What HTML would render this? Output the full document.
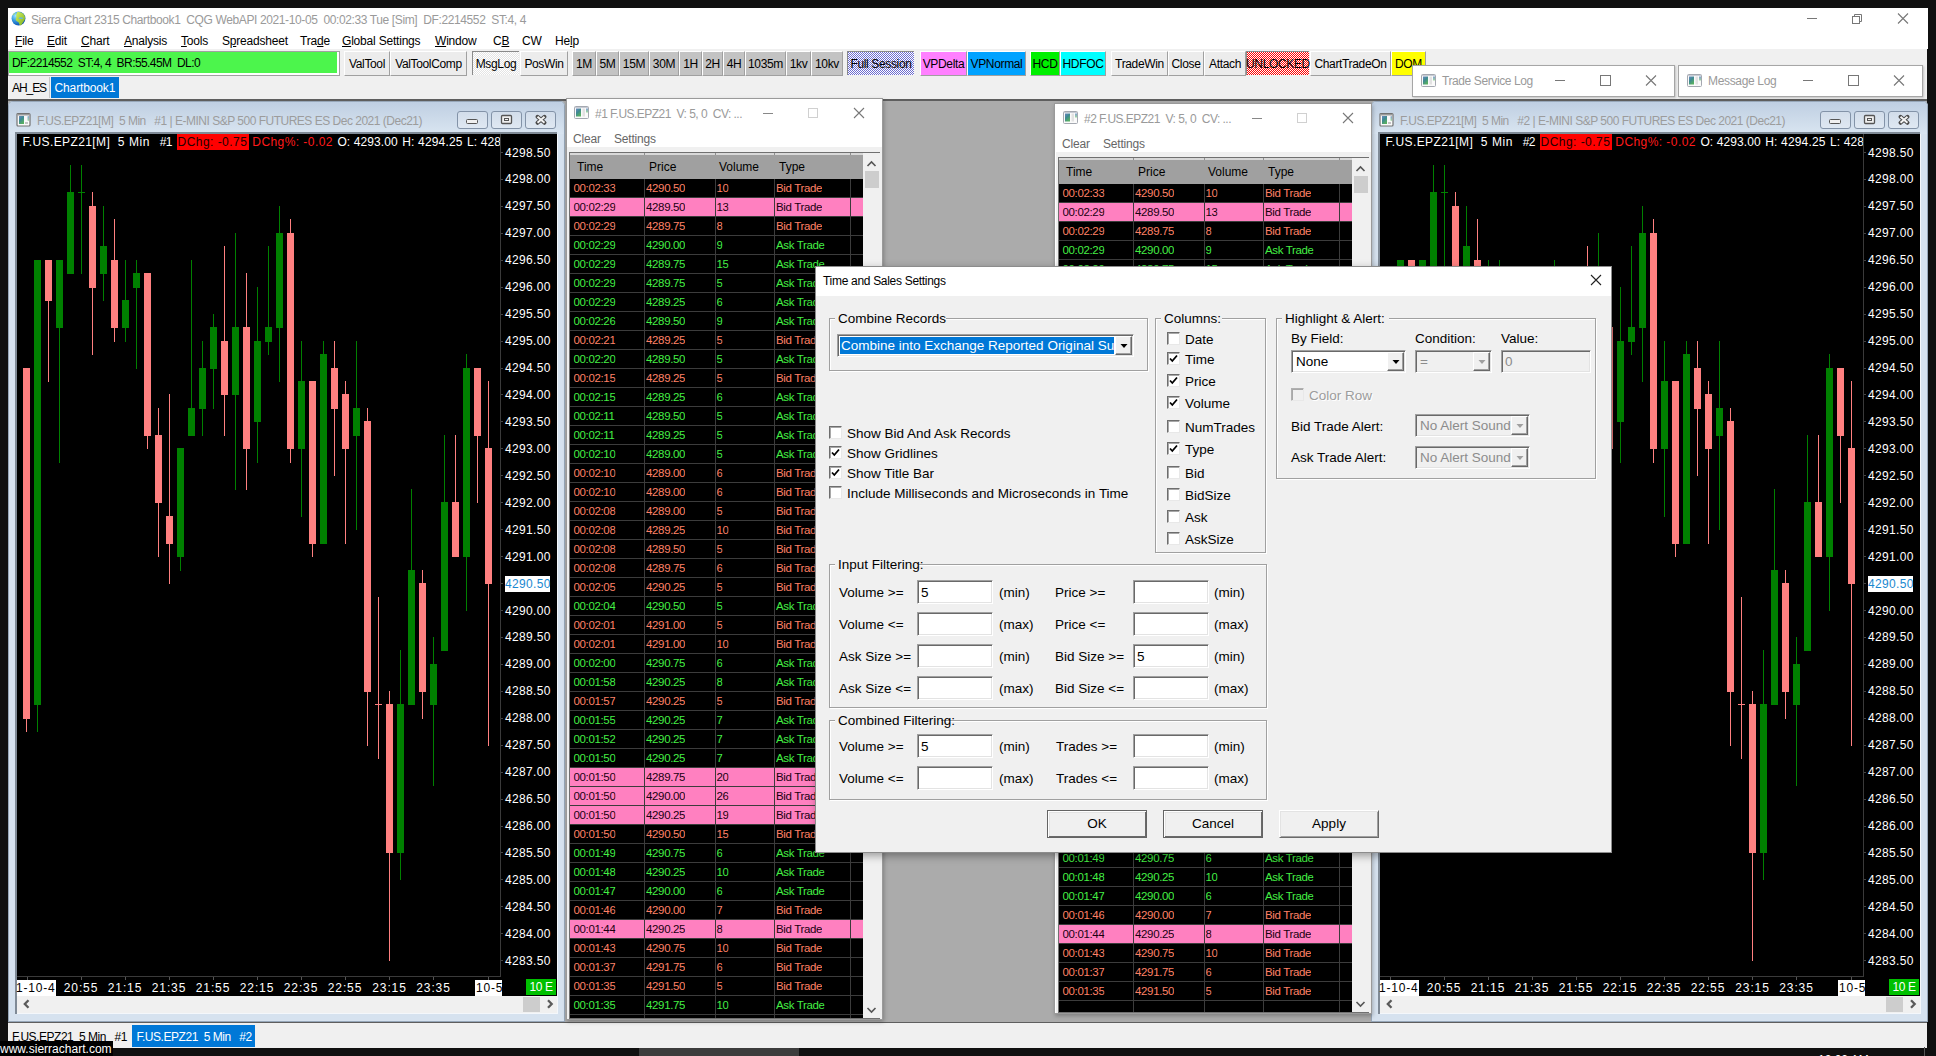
<!DOCTYPE html>
<html><head><meta charset="utf-8"><title>Sierra Chart</title>
<style>
html,body{margin:0;padding:0;width:1936px;height:1056px;overflow:hidden;background:#101010}
.a{position:absolute;box-sizing:content-box}
.t{font-family:"Liberation Sans", sans-serif;white-space:pre}
.btn{border-right:1px solid #a0a0a0;border-bottom:1px solid #a0a0a0;border-left:1px solid #fff;border-top:1px solid #fff;box-sizing:border-box}
svg.a{overflow:visible}
</style></head><body>
<div class="a" style="left:0px;top:0px;width:1936px;height:1056px;background:#101010;"></div>
<div class="a" style="left:8px;top:8px;width:1920px;height:41px;background:#ffffff;"></div>
<svg class="a" style="left:10.5px;top:11.3px" width="15" height="15" viewBox="0 0 16 16"><defs><radialGradient id="gl" cx="30%" cy="30%" r="75%"><stop offset="0" stop-color="#9fe6ff"/><stop offset="0.45" stop-color="#3a9ee0"/><stop offset="1" stop-color="#0a50b0"/></radialGradient><linearGradient id="gland" x1="0" y1="0" x2="1" y2="1"><stop offset="0" stop-color="#d4f060"/><stop offset="1" stop-color="#7cb020"/></linearGradient></defs><circle cx="8" cy="8" r="7.4" fill="url(#gl)"/><path d="M6.5 1.2 C9 0.6 12.5 1.5 14.3 4.5 C15.3 6.5 15.2 9 14 10.5 C13 12 12 13.5 11 15 C10 15.5 9 15 8.6 13.2 C8.2 11.5 6.4 11.4 5.4 10.2 C4.7 9 5 7.5 6 6.8 C5.3 5.2 5.5 3.8 6.5 1.2 Z" fill="url(#gland)"/><ellipse cx="10.5" cy="7.6" rx="2.4" ry="0.9" fill="#6ab8d0"/><path d="M1.5 4.5 C2.5 3 3.5 2.5 4.5 2.2 C4 3.2 3 4 1.5 4.5Z" fill="#b8e040"/></svg>
<div class="a t " style="left:31px;top:12.5px;line-height:14px;font-size:12px;color:#9a9a9a;;letter-spacing:-0.381px">Sierra Chart 2315 Chartbook1  CQG WebAPI 2021-10-05  00:02:33 Tue [Sim]  DF:2214552  ST:4, 4</div>
<svg class="a" style="left:1800px;top:10px" width="120" height="20"><line x1="7" y1="8.5" x2="17" y2="8.5" stroke="#777" stroke-width="1"/><rect x="52.5" y="6.5" width="7" height="7" fill="none" stroke="#777"/><path d="M54.5 6.5 V4.5 H61.5 V11.5 H59.5" fill="none" stroke="#777"/><path d="M98 3.5 L108 13.5 M108 3.5 L98 13.5" stroke="#777" stroke-width="1.1"/></svg>
<div class="a t" style="left:15px;top:34.3px;line-height:14px;font-size:12px;color:#000;letter-spacing:-0.2px"><span style="text-decoration:underline;text-underline-offset:1px">F</span>ile</div>
<div class="a t" style="left:47px;top:34.3px;line-height:14px;font-size:12px;color:#000;letter-spacing:-0.2px"><span style="text-decoration:underline;text-underline-offset:1px">E</span>dit</div>
<div class="a t" style="left:81px;top:34.3px;line-height:14px;font-size:12px;color:#000;letter-spacing:-0.2px"><span style="text-decoration:underline;text-underline-offset:1px">C</span>hart</div>
<div class="a t" style="left:124px;top:34.3px;line-height:14px;font-size:12px;color:#000;letter-spacing:-0.2px"><span style="text-decoration:underline;text-underline-offset:1px">A</span>nalysis</div>
<div class="a t" style="left:181px;top:34.3px;line-height:14px;font-size:12px;color:#000;letter-spacing:-0.2px"><span style="text-decoration:underline;text-underline-offset:1px">T</span>ools</div>
<div class="a t" style="left:222px;top:34.3px;line-height:14px;font-size:12px;color:#000;letter-spacing:-0.2px">S<span style="text-decoration:underline;text-underline-offset:1px">p</span>readsheet</div>
<div class="a t" style="left:300px;top:34.3px;line-height:14px;font-size:12px;color:#000;letter-spacing:-0.2px">Tra<span style="text-decoration:underline;text-underline-offset:1px">d</span>e</div>
<div class="a t" style="left:342px;top:34.3px;line-height:14px;font-size:12px;color:#000;letter-spacing:-0.2px"><span style="text-decoration:underline;text-underline-offset:1px">G</span>lobal Settings</div>
<div class="a t" style="left:435px;top:34.3px;line-height:14px;font-size:12px;color:#000;letter-spacing:-0.2px"><span style="text-decoration:underline;text-underline-offset:1px">W</span>indow</div>
<div class="a t" style="left:493px;top:34.3px;line-height:14px;font-size:12px;color:#000;letter-spacing:-0.2px">C<span style="text-decoration:underline;text-underline-offset:1px">B</span></div>
<div class="a t" style="left:522px;top:34.3px;line-height:14px;font-size:12px;color:#000;letter-spacing:-0.2px">CW</div>
<div class="a t" style="left:555px;top:34.3px;line-height:14px;font-size:12px;color:#000;letter-spacing:-0.2px">He<span style="text-decoration:underline;text-underline-offset:1px">l</span>p</div>
<div class="a" style="left:8px;top:49px;width:1919px;height:52px;background:#f0f0f0;"></div>
<div class="a" style="left:8px;top:51px;width:332px;height:25px;background:#a0a0a0;"></div>
<div class="a" style="left:9px;top:52px;width:330px;height:23px;background:#ffffff;"></div>
<div class="a" style="left:9px;top:52px;width:328px;height:21px;background:#4cf54c;"></div>
<div class="a t " style="left:12px;top:55.5px;line-height:14px;font-size:12px;color:#000;;letter-spacing:-0.577px">DF:2214552  ST:4, 4  BR:55.45M  DL:0</div>
<svg class="a" style="left:0;top:0" width="0" height="0"><defs><linearGradient id="icg" x1="0" y1="0" x2="0.6" y2="1"><stop offset="0" stop-color="#6a88c0"/><stop offset="0.5" stop-color="#3e8a90"/><stop offset="1" stop-color="#58b060"/></linearGradient><linearGradient id="icg2" x1="0" y1="0" x2="0" y2="1"><stop offset="0" stop-color="#80a0d0"/><stop offset="1" stop-color="#a0d8a0"/></linearGradient><pattern id="dithB" width="2" height="2" patternUnits="userSpaceOnUse"><rect width="2" height="2" fill="#ffffff"/><rect width="1" height="1" fill="#6c6cd0"/><rect x="1" y="1" width="1" height="1" fill="#6c6cd0"/></pattern><pattern id="dithR" width="2" height="2" patternUnits="userSpaceOnUse"><rect width="2" height="2" fill="#ffffff"/><rect width="1" height="1" fill="#ff0000"/><rect x="1" y="1" width="1" height="1" fill="#ff0000"/></pattern><pattern id="dithW" width="2" height="2" patternUnits="userSpaceOnUse"><rect width="2" height="2" fill="#ffffff"/><rect width="1" height="1" fill="#e4e4e4"/><rect x="1" y="1" width="1" height="1" fill="#e4e4e4"/></pattern></defs></svg>
<div class="a btn" style="left:344px;top:51px;width:46px;height:25px;background:#ececec"></div>
<div class="a t" style="left:339.0px;width:56px;text-align:center;top:57.0px;line-height:14px;font-size:12px;color:#000;letter-spacing:-0.35px">ValTool</div>
<div class="a btn" style="left:390px;top:51px;width:77px;height:25px;background:#ececec"></div>
<div class="a t" style="left:385.0px;width:87px;text-align:center;top:57.0px;line-height:14px;font-size:12px;color:#000;letter-spacing:-0.35px">ValToolComp</div>
<div class="a" style="left:472px;top:51px;width:47px;height:24px;background:#fff;border-left:1px solid #8a8a8a;border-top:1px solid #8a8a8a;box-sizing:border-box"></div>
<svg class="a" style="left:473px;top:52px" width="46" height="23" shape-rendering="crispEdges"><rect width="46" height="23" fill="url(#dithW)"/></svg>
<div class="a t" style="left:467.0px;width:58px;text-align:center;top:57.0px;line-height:14px;font-size:12px;color:#000;letter-spacing:-0.35px">MsgLog</div>
<div class="a btn" style="left:520px;top:51px;width:48px;height:25px;background:#ececec"></div>
<div class="a t" style="left:515.0px;width:58px;text-align:center;top:57.0px;line-height:14px;font-size:12px;color:#000;letter-spacing:-0.35px">PosWin</div>
<div class="a btn" style="left:572px;top:51px;width:24px;height:25px;background:#c3c3c3"></div>
<div class="a t" style="left:567.0px;width:34px;text-align:center;top:57.0px;line-height:14px;font-size:12px;color:#000;letter-spacing:-0.35px">1M</div>
<div class="a btn" style="left:596px;top:51px;width:23px;height:25px;background:#c3c3c3"></div>
<div class="a t" style="left:591.0px;width:33px;text-align:center;top:57.0px;line-height:14px;font-size:12px;color:#000;letter-spacing:-0.35px">5M</div>
<div class="a btn" style="left:619px;top:51px;width:30px;height:25px;background:#c3c3c3"></div>
<div class="a t" style="left:614.0px;width:40px;text-align:center;top:57.0px;line-height:14px;font-size:12px;color:#000;letter-spacing:-0.35px">15M</div>
<div class="a btn" style="left:649px;top:51px;width:30px;height:25px;background:#c3c3c3"></div>
<div class="a t" style="left:644.0px;width:40px;text-align:center;top:57.0px;line-height:14px;font-size:12px;color:#000;letter-spacing:-0.35px">30M</div>
<div class="a btn" style="left:679px;top:51px;width:23px;height:25px;background:#c3c3c3"></div>
<div class="a t" style="left:674.0px;width:33px;text-align:center;top:57.0px;line-height:14px;font-size:12px;color:#000;letter-spacing:-0.35px">1H</div>
<div class="a btn" style="left:702px;top:51px;width:21px;height:25px;background:#c3c3c3"></div>
<div class="a t" style="left:697.0px;width:31px;text-align:center;top:57.0px;line-height:14px;font-size:12px;color:#000;letter-spacing:-0.35px">2H</div>
<div class="a btn" style="left:723px;top:51px;width:22px;height:25px;background:#c3c3c3"></div>
<div class="a t" style="left:718.0px;width:32px;text-align:center;top:57.0px;line-height:14px;font-size:12px;color:#000;letter-spacing:-0.35px">4H</div>
<div class="a btn" style="left:745px;top:51px;width:41px;height:25px;background:#c3c3c3"></div>
<div class="a t" style="left:740.0px;width:51px;text-align:center;top:57.0px;line-height:14px;font-size:12px;color:#000;letter-spacing:-0.35px">1035m</div>
<div class="a btn" style="left:786px;top:51px;width:25px;height:25px;background:#c3c3c3"></div>
<div class="a t" style="left:781.0px;width:35px;text-align:center;top:57.0px;line-height:14px;font-size:12px;color:#000;letter-spacing:-0.35px">1kv</div>
<div class="a btn" style="left:811px;top:51px;width:32px;height:25px;background:#c3c3c3"></div>
<div class="a t" style="left:806.0px;width:42px;text-align:center;top:57.0px;line-height:14px;font-size:12px;color:#000;letter-spacing:-0.35px">10kv</div>
<div class="a" style="left:847px;top:51px;width:67px;height:24px;background:#fff;border-left:1px solid #8a8a8a;border-top:1px solid #8a8a8a;box-sizing:border-box"></div>
<svg class="a" style="left:848px;top:52px" width="66" height="23" shape-rendering="crispEdges"><rect width="66" height="23" fill="url(#dithB)"/></svg>
<div class="a t" style="left:842.0px;width:78px;text-align:center;top:57.0px;line-height:14px;font-size:12px;color:#000;letter-spacing:-0.35px">Full Session</div>
<div class="a btn" style="left:920px;top:51px;width:47px;height:25px;background:#ff80ff"></div>
<div class="a t" style="left:915.0px;width:57px;text-align:center;top:57.0px;line-height:14px;font-size:12px;color:#000;letter-spacing:-0.35px">VPDelta</div>
<div class="a btn" style="left:967px;top:51px;width:59px;height:25px;background:#00a2ff"></div>
<div class="a t" style="left:962.0px;width:69px;text-align:center;top:57.0px;line-height:14px;font-size:12px;color:#000;letter-spacing:-0.35px">VPNormal</div>
<div class="a btn" style="left:1030px;top:51px;width:30px;height:25px;background:#00f000"></div>
<div class="a t" style="left:1025.0px;width:40px;text-align:center;top:57.0px;line-height:14px;font-size:12px;color:#000;letter-spacing:-0.35px">HCD</div>
<div class="a btn" style="left:1060px;top:51px;width:46px;height:25px;background:#00ffff"></div>
<div class="a t" style="left:1055.0px;width:56px;text-align:center;top:57.0px;line-height:14px;font-size:12px;color:#000;letter-spacing:-0.35px">HDFOC</div>
<div class="a btn" style="left:1111px;top:51px;width:57px;height:25px;background:#ececec"></div>
<div class="a t" style="left:1106.0px;width:67px;text-align:center;top:57.0px;line-height:14px;font-size:12px;color:#000;letter-spacing:-0.35px">TradeWin</div>
<div class="a btn" style="left:1168px;top:51px;width:36px;height:25px;background:#ececec"></div>
<div class="a t" style="left:1163.0px;width:46px;text-align:center;top:57.0px;line-height:14px;font-size:12px;color:#000;letter-spacing:-0.35px">Close</div>
<div class="a btn" style="left:1204px;top:51px;width:42px;height:25px;background:#ececec"></div>
<div class="a t" style="left:1199.0px;width:52px;text-align:center;top:57.0px;line-height:14px;font-size:12px;color:#000;letter-spacing:-0.35px">Attach</div>
<div class="a" style="left:1246px;top:51px;width:63px;height:24px;background:#fff;border-left:1px solid #8a8a8a;border-top:1px solid #8a8a8a;box-sizing:border-box"></div>
<svg class="a" style="left:1247px;top:52px" width="62" height="23" shape-rendering="crispEdges"><rect width="62" height="23" fill="url(#dithR)"/></svg>
<div class="a t" style="left:1241.0px;width:74px;text-align:center;top:57.0px;line-height:14px;font-size:12px;color:#000;letter-spacing:-0.35px">UNLOCKED</div>
<div class="a btn" style="left:1310px;top:51px;width:81px;height:25px;background:#ececec"></div>
<div class="a t" style="left:1305.0px;width:91px;text-align:center;top:57.0px;line-height:14px;font-size:12px;color:#000;letter-spacing:-0.35px">ChartTradeOn</div>
<div class="a btn" style="left:1391px;top:51px;width:35px;height:25px;background:#ffff00"></div>
<div class="a t" style="left:1386.0px;width:45px;text-align:center;top:57.0px;line-height:14px;font-size:12px;color:#000;letter-spacing:-0.35px">DOM</div>
<div class="a" style="left:49px;top:77px;width:1px;height:21px;background:#c8c8c8;"></div>
<div class="a t " style="left:12px;top:80.5px;line-height:14px;font-size:12px;color:#000;;letter-spacing:-1.072px">AH_ES</div>
<div class="a" style="left:51px;top:77px;width:68px;height:21px;background:#0078d7;"></div>
<div class="a t " style="left:54.5px;top:80.5px;line-height:14px;font-size:12px;color:#fff;;letter-spacing:-0.125px">Chartbook1</div>
<div class="a" style="left:8px;top:99px;width:1919px;height:2px;background:#5e5e5e;"></div>
<div class="a" style="left:8px;top:101px;width:1919px;height:921px;background:#ababab;"></div>
<div class="a" style="left:8px;top:1022px;width:1919px;height:1px;background:#5e5e5e;"></div>
<div class="a" style="left:8px;top:1023px;width:1919px;height:25px;background:#f0f0f0;"></div>
<div class="a t " style="left:12px;top:1029.5px;line-height:14px;font-size:12px;color:#000;;letter-spacing:-0.472px">F.US.EPZ21  5 Min   #1</div>
<div class="a" style="left:132px;top:1025px;width:123px;height:22px;background:#0078d7;"></div>
<div class="a t " style="left:136.4px;top:1029.5px;line-height:14px;font-size:12px;color:#fff;;letter-spacing:-0.454px">F.US.EPZ21  5 Min   #2</div>
<div class="a" style="left:0px;top:1048px;width:1936px;height:8px;background:#101010;"></div>
<div class="a" style="left:639px;top:1048px;width:160px;height:8px;background:#3c3c3c;"></div>
<div class="a" style="left:0px;top:1041px;width:113px;height:15px;background:#000;"></div>
<div class="a t " style="left:0px;top:1041.5px;line-height:14px;font-size:12px;color:#fff;;letter-spacing:0.013px">www.sierrachart.com</div>
<div class="a t " style="left:1818px;top:1053.0px;line-height:14px;font-size:12px;color:#fff;">12:02 AM</div>
<div class="a" style="left:1924px;top:1047px;width:1px;height:9px;background:#555;"></div>
<div class="a" style="left:8px;top:101px;width:557px;height:921px;background:#d6e2ef;border-radius:5px 5px 0 0;box-shadow:inset 0 0 0 1px #97a7b9"></div>
<div class="a" style="left:9px;top:102px;width:555px;height:32px;background:linear-gradient(#bfcfe2,#d9e5f1);border-radius:4px 4px 0 0"></div>
<svg class="a" style="left:16px;top:113px" width="16" height="14" viewBox="0 0 16 14"><rect x="1" y="0.5" width="13" height="12.5" rx="1" fill="#fafafa" stroke="#727272" stroke-width="1.2"/><rect x="1.5" y="1" width="12" height="1.5" fill="#9a9a9a"/><rect x="3" y="3" width="5" height="8" fill="url(#icg)"/><rect x="9" y="9" width="3" height="2" fill="#c4c4c4"/><rect x="11.5" y="3" width="1.5" height="5" rx="0.7" fill="url(#icg2)"/></svg>
<div class="a t " style="left:37px;top:114.0px;line-height:14px;font-size:12px;color:#9c9c9c;;letter-spacing:-0.496px">F.US.EPZ21[M]  5 Min   #1 | E-MINI S&amp;P 500 FUTURES ES Dec 2021 (Dec21)</div>
<div class="a" style="left:457px;top:111px;width:29px;height:16px;border:1px solid #8393a8;border-radius:3px;background:linear-gradient(#d2ddea,#dfe8f2)"></div>
<div class="a" style="left:491px;top:111px;width:29px;height:16px;border:1px solid #8393a8;border-radius:3px;background:linear-gradient(#d2ddea,#dfe8f2)"></div>
<div class="a" style="left:525px;top:111px;width:29px;height:16px;border:1px solid #8393a8;border-radius:3px;background:linear-gradient(#d2ddea,#dfe8f2)"></div>
<svg class="a" style="left:457px;top:111px" width="100" height="18"><rect x="9.5" y="8.5" width="11" height="4" rx="1" fill="#f0f0f0" stroke="#555"/><rect x="44.5" y="4.5" width="10" height="8" rx="1" fill="#f0f0f0" stroke="#555" stroke-width="1.3"/><rect x="47.5" y="7.5" width="4" height="2" fill="#f0f0f0" stroke="#555"/><path d="M80.5 5.8 L87.5 11.8 M87.5 5.8 L80.5 11.8" stroke="#4a4a4a" stroke-width="4" stroke-linecap="round"/><path d="M80.5 5.8 L87.5 11.8 M87.5 5.8 L80.5 11.8" stroke="#f4f4f4" stroke-width="2"/></svg>
<div class="a" style="left:15px;top:132px;width:542px;height:882px;background:#7f8a96;"></div>
<div class="a" style="left:17px;top:1013px;width:541px;height:1px;background:#f4f7fb;"></div>
<div class="a" style="left:557px;top:134px;width:1px;height:880px;background:#f4f7fb;"></div>
<div class="a" style="left:17px;top:134px;width:540px;height:862px;background:#000;"></div>
<svg class="a" style="left:0;top:0;clip-path:inset(134px 1436px 80px 17px)" width="1936" height="1056"><g transform="translate(0,0)"><rect x="26" y="368" width="1" height="364" fill="#ff8080"/><rect x="23" y="368" width="7" height="351" fill="#ff8080"/><rect x="37" y="260" width="1" height="472" fill="#008000"/><rect x="34" y="260" width="7" height="445" fill="#008000"/><rect x="48" y="260" width="1" height="122" fill="#ff8080"/><rect x="45" y="260" width="7" height="41" fill="#ff8080"/><rect x="59" y="260" width="1" height="203" fill="#008000"/><rect x="56" y="260" width="7" height="68" fill="#008000"/><rect x="70" y="165" width="1" height="109" fill="#008000"/><rect x="67" y="192" width="7" height="82" fill="#008000"/><rect x="81" y="165" width="1" height="109" fill="#008000"/><rect x="78" y="192" width="7" height="1" fill="#008000"/><rect x="92" y="192" width="1" height="163" fill="#ff8080"/><rect x="89" y="206" width="7" height="82" fill="#ff8080"/><rect x="103" y="206" width="1" height="95" fill="#008000"/><rect x="100" y="246" width="7" height="28" fill="#008000"/><rect x="114" y="219" width="1" height="123" fill="#ff8080"/><rect x="111" y="260" width="7" height="68" fill="#ff8080"/><rect x="125" y="260" width="1" height="82" fill="#008000"/><rect x="122" y="300" width="7" height="28" fill="#008000"/><rect x="136" y="260" width="1" height="109" fill="#008000"/><rect x="133" y="273" width="7" height="15" fill="#008000"/><rect x="147" y="273" width="1" height="176" fill="#ff8080"/><rect x="144" y="273" width="7" height="163" fill="#ff8080"/><rect x="158" y="408" width="1" height="149" fill="#ff8080"/><rect x="155" y="435" width="7" height="68" fill="#ff8080"/><rect x="169" y="394" width="1" height="190" fill="#ff8080"/><rect x="166" y="516" width="7" height="28" fill="#ff8080"/><rect x="180" y="448" width="1" height="123" fill="#008000"/><rect x="177" y="448" width="7" height="109" fill="#008000"/><rect x="191" y="260" width="1" height="176" fill="#008000"/><rect x="188" y="408" width="7" height="28" fill="#008000"/><rect x="202" y="341" width="1" height="95" fill="#008000"/><rect x="199" y="368" width="7" height="41" fill="#008000"/><rect x="213" y="314" width="1" height="95" fill="#008000"/><rect x="210" y="327" width="7" height="42" fill="#008000"/><rect x="224" y="246" width="1" height="190" fill="#ff8080"/><rect x="221" y="341" width="7" height="54" fill="#ff8080"/><rect x="235" y="233" width="1" height="257" fill="#008000"/><rect x="232" y="327" width="7" height="68" fill="#008000"/><rect x="246" y="273" width="1" height="217" fill="#ff8080"/><rect x="243" y="327" width="7" height="122" fill="#ff8080"/><rect x="257" y="287" width="1" height="176" fill="#008000"/><rect x="254" y="341" width="7" height="81" fill="#008000"/><rect x="268" y="246" width="1" height="109" fill="#008000"/><rect x="265" y="327" width="7" height="15" fill="#008000"/><rect x="279" y="206" width="1" height="176" fill="#008000"/><rect x="276" y="233" width="7" height="95" fill="#008000"/><rect x="290" y="219" width="1" height="244" fill="#ff8080"/><rect x="287" y="233" width="7" height="216" fill="#ff8080"/><rect x="301" y="341" width="1" height="176" fill="#008000"/><rect x="298" y="381" width="7" height="68" fill="#008000"/><rect x="312" y="381" width="1" height="176" fill="#ff8080"/><rect x="309" y="381" width="7" height="163" fill="#ff8080"/><rect x="323" y="341" width="1" height="203" fill="#008000"/><rect x="320" y="354" width="7" height="190" fill="#008000"/><rect x="334" y="341" width="1" height="135" fill="#ff8080"/><rect x="331" y="368" width="7" height="41" fill="#ff8080"/><rect x="345" y="381" width="1" height="163" fill="#ff8080"/><rect x="342" y="394" width="7" height="55" fill="#ff8080"/><rect x="356" y="341" width="1" height="189" fill="#008000"/><rect x="353" y="408" width="7" height="28" fill="#008000"/><rect x="367" y="408" width="1" height="338" fill="#ff8080"/><rect x="364" y="421" width="7" height="271" fill="#ff8080"/><rect x="378" y="597" width="1" height="162" fill="#ff8080"/><rect x="375" y="704" width="7" height="1" fill="#ff8080"/><rect x="389" y="691" width="1" height="270" fill="#ff8080"/><rect x="386" y="704" width="7" height="149" fill="#ff8080"/><rect x="400" y="650" width="1" height="230" fill="#008000"/><rect x="397" y="704" width="7" height="149" fill="#008000"/><rect x="411" y="489" width="1" height="216" fill="#008000"/><rect x="408" y="570" width="7" height="135" fill="#008000"/><rect x="422" y="570" width="1" height="149" fill="#ff8080"/><rect x="419" y="583" width="7" height="109" fill="#ff8080"/><rect x="433" y="637" width="1" height="149" fill="#008000"/><rect x="430" y="664" width="7" height="41" fill="#008000"/><rect x="444" y="435" width="1" height="216" fill="#008000"/><rect x="441" y="502" width="7" height="149" fill="#008000"/><rect x="455" y="435" width="1" height="122" fill="#ff8080"/><rect x="452" y="502" width="7" height="55" fill="#ff8080"/><rect x="466" y="354" width="1" height="257" fill="#008000"/><rect x="463" y="368" width="7" height="189" fill="#008000"/><rect x="477" y="368" width="1" height="135" fill="#ff8080"/><rect x="474" y="368" width="7" height="68" fill="#ff8080"/><rect x="488" y="381" width="1" height="365" fill="#ff8080"/><rect x="485" y="448" width="7" height="136" fill="#ff8080"/></g></svg>
<div class="a" style="left:500px;top:134px;width:1px;height:843px;background:#3a3a3a;"></div>
<div class="a" style="left:501px;top:152px;width:2px;height:1px;background:#444;"></div>
<div class="a t " style="left:505px;top:145.5px;line-height:14px;font-size:12px;color:#fff;letter-spacing:0.35px">4298.50</div>
<div class="a" style="left:501px;top:179px;width:2px;height:1px;background:#444;"></div>
<div class="a t " style="left:505px;top:172.4px;line-height:14px;font-size:12px;color:#fff;letter-spacing:0.35px">4298.00</div>
<div class="a" style="left:501px;top:206px;width:2px;height:1px;background:#444;"></div>
<div class="a t " style="left:505px;top:199.4px;line-height:14px;font-size:12px;color:#fff;letter-spacing:0.35px">4297.50</div>
<div class="a" style="left:501px;top:233px;width:2px;height:1px;background:#444;"></div>
<div class="a t " style="left:505px;top:226.3px;line-height:14px;font-size:12px;color:#fff;letter-spacing:0.35px">4297.00</div>
<div class="a" style="left:501px;top:260px;width:2px;height:1px;background:#444;"></div>
<div class="a t " style="left:505px;top:253.3px;line-height:14px;font-size:12px;color:#fff;letter-spacing:0.35px">4296.50</div>
<div class="a" style="left:501px;top:287px;width:2px;height:1px;background:#444;"></div>
<div class="a t " style="left:505px;top:280.2px;line-height:14px;font-size:12px;color:#fff;letter-spacing:0.35px">4296.00</div>
<div class="a" style="left:501px;top:314px;width:2px;height:1px;background:#444;"></div>
<div class="a t " style="left:505px;top:307.1px;line-height:14px;font-size:12px;color:#fff;letter-spacing:0.35px">4295.50</div>
<div class="a" style="left:501px;top:341px;width:2px;height:1px;background:#444;"></div>
<div class="a t " style="left:505px;top:334.1px;line-height:14px;font-size:12px;color:#fff;letter-spacing:0.35px">4295.00</div>
<div class="a" style="left:501px;top:368px;width:2px;height:1px;background:#444;"></div>
<div class="a t " style="left:505px;top:361.0px;line-height:14px;font-size:12px;color:#fff;letter-spacing:0.35px">4294.50</div>
<div class="a" style="left:501px;top:394px;width:2px;height:1px;background:#444;"></div>
<div class="a t " style="left:505px;top:388.0px;line-height:14px;font-size:12px;color:#fff;letter-spacing:0.35px">4294.00</div>
<div class="a" style="left:501px;top:421px;width:2px;height:1px;background:#444;"></div>
<div class="a t " style="left:505px;top:414.9px;line-height:14px;font-size:12px;color:#fff;letter-spacing:0.35px">4293.50</div>
<div class="a" style="left:501px;top:448px;width:2px;height:1px;background:#444;"></div>
<div class="a t " style="left:505px;top:441.8px;line-height:14px;font-size:12px;color:#fff;letter-spacing:0.35px">4293.00</div>
<div class="a" style="left:501px;top:475px;width:2px;height:1px;background:#444;"></div>
<div class="a t " style="left:505px;top:468.8px;line-height:14px;font-size:12px;color:#fff;letter-spacing:0.35px">4292.50</div>
<div class="a" style="left:501px;top:502px;width:2px;height:1px;background:#444;"></div>
<div class="a t " style="left:505px;top:495.7px;line-height:14px;font-size:12px;color:#fff;letter-spacing:0.35px">4292.00</div>
<div class="a" style="left:501px;top:529px;width:2px;height:1px;background:#444;"></div>
<div class="a t " style="left:505px;top:522.7px;line-height:14px;font-size:12px;color:#fff;letter-spacing:0.35px">4291.50</div>
<div class="a" style="left:501px;top:556px;width:2px;height:1px;background:#444;"></div>
<div class="a t " style="left:505px;top:549.6px;line-height:14px;font-size:12px;color:#fff;letter-spacing:0.35px">4291.00</div>
<div class="a" style="left:501px;top:583px;width:2px;height:1px;background:#444;"></div>
<div class="a" style="left:505px;top:576px;width:45px;height:16px;background:#fff;"></div>
<div class="a t " style="left:505px;top:576.5px;line-height:14px;font-size:12px;color:#1a88d0;letter-spacing:0.35px">4290.50</div>
<div class="a" style="left:501px;top:610px;width:2px;height:1px;background:#444;"></div>
<div class="a t " style="left:505px;top:603.5px;line-height:14px;font-size:12px;color:#fff;letter-spacing:0.35px">4290.00</div>
<div class="a" style="left:501px;top:637px;width:2px;height:1px;background:#444;"></div>
<div class="a t " style="left:505px;top:630.4px;line-height:14px;font-size:12px;color:#fff;letter-spacing:0.35px">4289.50</div>
<div class="a" style="left:501px;top:664px;width:2px;height:1px;background:#444;"></div>
<div class="a t " style="left:505px;top:657.4px;line-height:14px;font-size:12px;color:#fff;letter-spacing:0.35px">4289.00</div>
<div class="a" style="left:501px;top:691px;width:2px;height:1px;background:#444;"></div>
<div class="a t " style="left:505px;top:684.3px;line-height:14px;font-size:12px;color:#fff;letter-spacing:0.35px">4288.50</div>
<div class="a" style="left:501px;top:718px;width:2px;height:1px;background:#444;"></div>
<div class="a t " style="left:505px;top:711.2px;line-height:14px;font-size:12px;color:#fff;letter-spacing:0.35px">4288.00</div>
<div class="a" style="left:501px;top:745px;width:2px;height:1px;background:#444;"></div>
<div class="a t " style="left:505px;top:738.2px;line-height:14px;font-size:12px;color:#fff;letter-spacing:0.35px">4287.50</div>
<div class="a" style="left:501px;top:772px;width:2px;height:1px;background:#444;"></div>
<div class="a t " style="left:505px;top:765.1px;line-height:14px;font-size:12px;color:#fff;letter-spacing:0.35px">4287.00</div>
<div class="a" style="left:501px;top:799px;width:2px;height:1px;background:#444;"></div>
<div class="a t " style="left:505px;top:792.1px;line-height:14px;font-size:12px;color:#fff;letter-spacing:0.35px">4286.50</div>
<div class="a" style="left:501px;top:826px;width:2px;height:1px;background:#444;"></div>
<div class="a t " style="left:505px;top:819.0px;line-height:14px;font-size:12px;color:#fff;letter-spacing:0.35px">4286.00</div>
<div class="a" style="left:501px;top:852px;width:2px;height:1px;background:#444;"></div>
<div class="a t " style="left:505px;top:845.9px;line-height:14px;font-size:12px;color:#fff;letter-spacing:0.35px">4285.50</div>
<div class="a" style="left:501px;top:879px;width:2px;height:1px;background:#444;"></div>
<div class="a t " style="left:505px;top:872.9px;line-height:14px;font-size:12px;color:#fff;letter-spacing:0.35px">4285.00</div>
<div class="a" style="left:501px;top:906px;width:2px;height:1px;background:#444;"></div>
<div class="a t " style="left:505px;top:899.8px;line-height:14px;font-size:12px;color:#fff;letter-spacing:0.35px">4284.50</div>
<div class="a" style="left:501px;top:933px;width:2px;height:1px;background:#444;"></div>
<div class="a t " style="left:505px;top:926.8px;line-height:14px;font-size:12px;color:#fff;letter-spacing:0.35px">4284.00</div>
<div class="a" style="left:501px;top:960px;width:2px;height:1px;background:#444;"></div>
<div class="a t " style="left:505px;top:953.7px;line-height:14px;font-size:12px;color:#fff;letter-spacing:0.35px">4283.50</div>
<div class="a" style="left:17px;top:976px;width:484px;height:1px;background:#3a3a3a;"></div>
<div class="a" style="left:27px;top:977px;width:1px;height:3px;background:#555;"></div>
<div class="a" style="left:81px;top:977px;width:1px;height:3px;background:#555;"></div>
<div class="a" style="left:125px;top:977px;width:1px;height:3px;background:#555;"></div>
<div class="a" style="left:169px;top:977px;width:1px;height:3px;background:#555;"></div>
<div class="a" style="left:213px;top:977px;width:1px;height:3px;background:#555;"></div>
<div class="a" style="left:257px;top:977px;width:1px;height:3px;background:#555;"></div>
<div class="a" style="left:301px;top:977px;width:1px;height:3px;background:#555;"></div>
<div class="a" style="left:345px;top:977px;width:1px;height:3px;background:#555;"></div>
<div class="a" style="left:389px;top:977px;width:1px;height:3px;background:#555;"></div>
<div class="a" style="left:433px;top:977px;width:1px;height:3px;background:#555;"></div>
<div class="a" style="left:488px;top:977px;width:1px;height:3px;background:#555;"></div>
<div class="a" style="left:17px;top:980px;width:39px;height:16px;background:#fff;"></div>
<div class="a t " style="left:16px;top:980.6px;line-height:14px;font-size:12px;color:#000;letter-spacing:0.8px">1-10-4</div>
<div class="a t" style="left:51.0px;width:60px;text-align:center;top:980.6px;line-height:14px;font-size:12px;color:#fff;letter-spacing:0.9px">20:55</div>
<div class="a t" style="left:95.0px;width:60px;text-align:center;top:980.6px;line-height:14px;font-size:12px;color:#fff;letter-spacing:0.9px">21:15</div>
<div class="a t" style="left:139.0px;width:60px;text-align:center;top:980.6px;line-height:14px;font-size:12px;color:#fff;letter-spacing:0.9px">21:35</div>
<div class="a t" style="left:183.0px;width:60px;text-align:center;top:980.6px;line-height:14px;font-size:12px;color:#fff;letter-spacing:0.9px">21:55</div>
<div class="a t" style="left:227.0px;width:60px;text-align:center;top:980.6px;line-height:14px;font-size:12px;color:#fff;letter-spacing:0.9px">22:15</div>
<div class="a t" style="left:271.0px;width:60px;text-align:center;top:980.6px;line-height:14px;font-size:12px;color:#fff;letter-spacing:0.9px">22:35</div>
<div class="a t" style="left:315.0px;width:60px;text-align:center;top:980.6px;line-height:14px;font-size:12px;color:#fff;letter-spacing:0.9px">22:55</div>
<div class="a t" style="left:359.5px;width:60px;text-align:center;top:980.6px;line-height:14px;font-size:12px;color:#fff;letter-spacing:0.9px">23:15</div>
<div class="a t" style="left:403.5px;width:60px;text-align:center;top:980.6px;line-height:14px;font-size:12px;color:#fff;letter-spacing:0.9px">23:35</div>
<div class="a" style="left:475px;top:980px;width:27px;height:16px;background:#fff;"></div>
<div class="a t " style="left:476px;top:980.6px;line-height:14px;font-size:12px;color:#000;letter-spacing:0.8px">10-5</div>
<div class="a" style="left:526px;top:979px;width:30px;height:16px;background:#00c000;"></div>
<div class="a t " style="left:529.5px;top:980.3px;line-height:14px;font-size:12px;color:#fff;;letter-spacing:-0.422px">10 E</div>
<div class="a" style="left:17px;top:134px;width:483px;height:16px;overflow:hidden">
<div class="a" style="left:160px;top:0px;width:72px;height:16px;background:#ff0000;"></div>
<div class="a t " style="left:5.399999999999999px;top:1.0px;line-height:14px;font-size:12px;color:#fff;;letter-spacing:0.386px">F.US.EPZ21[M]</div>
<div class="a t " style="left:100.7px;top:1.0px;line-height:14px;font-size:12px;color:#fff;;letter-spacing:0.591px">5 Min</div>
<div class="a t " style="left:142.8px;top:1.0px;line-height:14px;font-size:12px;color:#fff;;letter-spacing:-0.630px">#1</div>
<div class="a t " style="left:160.5px;top:1.0px;line-height:14px;font-size:12px;color:#200000;;letter-spacing:0.463px">DChg: -0.75</div>
<div class="a t " style="left:235.3px;top:1.0px;line-height:14px;font-size:12px;color:#ff1a1a;;letter-spacing:0.435px">DChg%: -0.02</div>
<div class="a t " style="left:320.4px;top:1.0px;line-height:14px;font-size:12px;color:#fff;;letter-spacing:0.111px">O: 4293.00</div>
<div class="a t " style="left:385.2px;top:1.0px;line-height:14px;font-size:12px;color:#fff;;letter-spacing:0.178px">H: 4294.25</div>
<div class="a t " style="left:450px;top:1.0px;line-height:14px;font-size:12px;color:#fff;;letter-spacing:0.128px">L: 4283.50</div>
</div>
<div class="a" style="left:17px;top:996px;width:540px;height:17px;background:#f0f0f0;"></div>
<svg class="a" style="left:21px;top:997px" width="12" height="14"><path d="M7.5 3.2 L3.8 7 L7.5 10.8" fill="none" stroke="#5a5a5a" stroke-width="2.3"/></svg>
<div class="a" style="left:523px;top:997px;width:17px;height:15px;background:#cdcdcd;"></div>
<svg class="a" style="left:544px;top:997px" width="12" height="14"><path d="M4 3.2 L7.7 7 L4 10.8" fill="none" stroke="#5a5a5a" stroke-width="2.3"/></svg>
<div class="a" style="left:1371px;top:101px;width:557px;height:921px;background:#d6e2ef;border-radius:5px 5px 0 0;box-shadow:inset 0 0 0 1px #97a7b9"></div>
<div class="a" style="left:1372px;top:102px;width:555px;height:32px;background:linear-gradient(#bfcfe2,#d9e5f1);border-radius:4px 4px 0 0"></div>
<svg class="a" style="left:1379px;top:113px" width="16" height="14" viewBox="0 0 16 14"><rect x="1" y="0.5" width="13" height="12.5" rx="1" fill="#fafafa" stroke="#727272" stroke-width="1.2"/><rect x="1.5" y="1" width="12" height="1.5" fill="#9a9a9a"/><rect x="3" y="3" width="5" height="8" fill="url(#icg)"/><rect x="9" y="9" width="3" height="2" fill="#c4c4c4"/><rect x="11.5" y="3" width="1.5" height="5" rx="0.7" fill="url(#icg2)"/></svg>
<div class="a t " style="left:1400px;top:114.0px;line-height:14px;font-size:12px;color:#9c9c9c;;letter-spacing:-0.496px">F.US.EPZ21[M]  5 Min   #2 | E-MINI S&amp;P 500 FUTURES ES Dec 2021 (Dec21)</div>
<div class="a" style="left:1820px;top:111px;width:29px;height:16px;border:1px solid #8393a8;border-radius:3px;background:linear-gradient(#d2ddea,#dfe8f2)"></div>
<div class="a" style="left:1854px;top:111px;width:29px;height:16px;border:1px solid #8393a8;border-radius:3px;background:linear-gradient(#d2ddea,#dfe8f2)"></div>
<div class="a" style="left:1888px;top:111px;width:29px;height:16px;border:1px solid #8393a8;border-radius:3px;background:linear-gradient(#d2ddea,#dfe8f2)"></div>
<svg class="a" style="left:1820px;top:111px" width="100" height="18"><rect x="9.5" y="8.5" width="11" height="4" rx="1" fill="#f0f0f0" stroke="#555"/><rect x="44.5" y="4.5" width="10" height="8" rx="1" fill="#f0f0f0" stroke="#555" stroke-width="1.3"/><rect x="47.5" y="7.5" width="4" height="2" fill="#f0f0f0" stroke="#555"/><path d="M80.5 5.8 L87.5 11.8 M87.5 5.8 L80.5 11.8" stroke="#4a4a4a" stroke-width="4" stroke-linecap="round"/><path d="M80.5 5.8 L87.5 11.8 M87.5 5.8 L80.5 11.8" stroke="#f4f4f4" stroke-width="2"/></svg>
<div class="a" style="left:1378px;top:132px;width:542px;height:882px;background:#7f8a96;"></div>
<div class="a" style="left:1380px;top:1013px;width:541px;height:1px;background:#f4f7fb;"></div>
<div class="a" style="left:1920px;top:134px;width:1px;height:880px;background:#f4f7fb;"></div>
<div class="a" style="left:1380px;top:134px;width:540px;height:862px;background:#000;"></div>
<svg class="a" style="left:0;top:0;clip-path:inset(134px 73px 80px 1380px)" width="1936" height="1056"><g transform="translate(1363,0)"><rect x="26" y="368" width="1" height="364" fill="#ff8080"/><rect x="23" y="368" width="7" height="351" fill="#ff8080"/><rect x="37" y="260" width="1" height="472" fill="#008000"/><rect x="34" y="260" width="7" height="445" fill="#008000"/><rect x="48" y="260" width="1" height="122" fill="#ff8080"/><rect x="45" y="260" width="7" height="41" fill="#ff8080"/><rect x="59" y="260" width="1" height="203" fill="#008000"/><rect x="56" y="260" width="7" height="68" fill="#008000"/><rect x="70" y="165" width="1" height="109" fill="#008000"/><rect x="67" y="192" width="7" height="82" fill="#008000"/><rect x="81" y="165" width="1" height="109" fill="#008000"/><rect x="78" y="192" width="7" height="1" fill="#008000"/><rect x="92" y="192" width="1" height="163" fill="#ff8080"/><rect x="89" y="206" width="7" height="82" fill="#ff8080"/><rect x="103" y="206" width="1" height="95" fill="#008000"/><rect x="100" y="246" width="7" height="28" fill="#008000"/><rect x="114" y="219" width="1" height="123" fill="#ff8080"/><rect x="111" y="260" width="7" height="68" fill="#ff8080"/><rect x="125" y="260" width="1" height="82" fill="#008000"/><rect x="122" y="300" width="7" height="28" fill="#008000"/><rect x="136" y="260" width="1" height="109" fill="#008000"/><rect x="133" y="273" width="7" height="15" fill="#008000"/><rect x="147" y="273" width="1" height="176" fill="#ff8080"/><rect x="144" y="273" width="7" height="163" fill="#ff8080"/><rect x="158" y="408" width="1" height="149" fill="#ff8080"/><rect x="155" y="435" width="7" height="68" fill="#ff8080"/><rect x="169" y="394" width="1" height="190" fill="#ff8080"/><rect x="166" y="516" width="7" height="28" fill="#ff8080"/><rect x="180" y="448" width="1" height="123" fill="#008000"/><rect x="177" y="448" width="7" height="109" fill="#008000"/><rect x="191" y="260" width="1" height="176" fill="#008000"/><rect x="188" y="408" width="7" height="28" fill="#008000"/><rect x="202" y="341" width="1" height="95" fill="#008000"/><rect x="199" y="368" width="7" height="41" fill="#008000"/><rect x="213" y="314" width="1" height="95" fill="#008000"/><rect x="210" y="327" width="7" height="42" fill="#008000"/><rect x="224" y="246" width="1" height="190" fill="#ff8080"/><rect x="221" y="341" width="7" height="54" fill="#ff8080"/><rect x="235" y="233" width="1" height="257" fill="#008000"/><rect x="232" y="327" width="7" height="68" fill="#008000"/><rect x="246" y="273" width="1" height="217" fill="#ff8080"/><rect x="243" y="327" width="7" height="122" fill="#ff8080"/><rect x="257" y="287" width="1" height="176" fill="#008000"/><rect x="254" y="341" width="7" height="81" fill="#008000"/><rect x="268" y="246" width="1" height="109" fill="#008000"/><rect x="265" y="327" width="7" height="15" fill="#008000"/><rect x="279" y="206" width="1" height="176" fill="#008000"/><rect x="276" y="233" width="7" height="95" fill="#008000"/><rect x="290" y="219" width="1" height="244" fill="#ff8080"/><rect x="287" y="233" width="7" height="216" fill="#ff8080"/><rect x="301" y="341" width="1" height="176" fill="#008000"/><rect x="298" y="381" width="7" height="68" fill="#008000"/><rect x="312" y="381" width="1" height="176" fill="#ff8080"/><rect x="309" y="381" width="7" height="163" fill="#ff8080"/><rect x="323" y="341" width="1" height="203" fill="#008000"/><rect x="320" y="354" width="7" height="190" fill="#008000"/><rect x="334" y="341" width="1" height="135" fill="#ff8080"/><rect x="331" y="368" width="7" height="41" fill="#ff8080"/><rect x="345" y="381" width="1" height="163" fill="#ff8080"/><rect x="342" y="394" width="7" height="55" fill="#ff8080"/><rect x="356" y="341" width="1" height="189" fill="#008000"/><rect x="353" y="408" width="7" height="28" fill="#008000"/><rect x="367" y="408" width="1" height="338" fill="#ff8080"/><rect x="364" y="421" width="7" height="271" fill="#ff8080"/><rect x="378" y="597" width="1" height="162" fill="#ff8080"/><rect x="375" y="704" width="7" height="1" fill="#ff8080"/><rect x="389" y="691" width="1" height="270" fill="#ff8080"/><rect x="386" y="704" width="7" height="149" fill="#ff8080"/><rect x="400" y="650" width="1" height="230" fill="#008000"/><rect x="397" y="704" width="7" height="149" fill="#008000"/><rect x="411" y="489" width="1" height="216" fill="#008000"/><rect x="408" y="570" width="7" height="135" fill="#008000"/><rect x="422" y="570" width="1" height="149" fill="#ff8080"/><rect x="419" y="583" width="7" height="109" fill="#ff8080"/><rect x="433" y="637" width="1" height="149" fill="#008000"/><rect x="430" y="664" width="7" height="41" fill="#008000"/><rect x="444" y="435" width="1" height="216" fill="#008000"/><rect x="441" y="502" width="7" height="149" fill="#008000"/><rect x="455" y="435" width="1" height="122" fill="#ff8080"/><rect x="452" y="502" width="7" height="55" fill="#ff8080"/><rect x="466" y="354" width="1" height="257" fill="#008000"/><rect x="463" y="368" width="7" height="189" fill="#008000"/><rect x="477" y="368" width="1" height="135" fill="#ff8080"/><rect x="474" y="368" width="7" height="68" fill="#ff8080"/><rect x="488" y="381" width="1" height="365" fill="#ff8080"/><rect x="485" y="448" width="7" height="136" fill="#ff8080"/></g></svg>
<div class="a" style="left:1863px;top:134px;width:1px;height:843px;background:#3a3a3a;"></div>
<div class="a" style="left:1864px;top:152px;width:2px;height:1px;background:#444;"></div>
<div class="a t " style="left:1868px;top:145.5px;line-height:14px;font-size:12px;color:#fff;letter-spacing:0.35px">4298.50</div>
<div class="a" style="left:1864px;top:179px;width:2px;height:1px;background:#444;"></div>
<div class="a t " style="left:1868px;top:172.4px;line-height:14px;font-size:12px;color:#fff;letter-spacing:0.35px">4298.00</div>
<div class="a" style="left:1864px;top:206px;width:2px;height:1px;background:#444;"></div>
<div class="a t " style="left:1868px;top:199.4px;line-height:14px;font-size:12px;color:#fff;letter-spacing:0.35px">4297.50</div>
<div class="a" style="left:1864px;top:233px;width:2px;height:1px;background:#444;"></div>
<div class="a t " style="left:1868px;top:226.3px;line-height:14px;font-size:12px;color:#fff;letter-spacing:0.35px">4297.00</div>
<div class="a" style="left:1864px;top:260px;width:2px;height:1px;background:#444;"></div>
<div class="a t " style="left:1868px;top:253.3px;line-height:14px;font-size:12px;color:#fff;letter-spacing:0.35px">4296.50</div>
<div class="a" style="left:1864px;top:287px;width:2px;height:1px;background:#444;"></div>
<div class="a t " style="left:1868px;top:280.2px;line-height:14px;font-size:12px;color:#fff;letter-spacing:0.35px">4296.00</div>
<div class="a" style="left:1864px;top:314px;width:2px;height:1px;background:#444;"></div>
<div class="a t " style="left:1868px;top:307.1px;line-height:14px;font-size:12px;color:#fff;letter-spacing:0.35px">4295.50</div>
<div class="a" style="left:1864px;top:341px;width:2px;height:1px;background:#444;"></div>
<div class="a t " style="left:1868px;top:334.1px;line-height:14px;font-size:12px;color:#fff;letter-spacing:0.35px">4295.00</div>
<div class="a" style="left:1864px;top:368px;width:2px;height:1px;background:#444;"></div>
<div class="a t " style="left:1868px;top:361.0px;line-height:14px;font-size:12px;color:#fff;letter-spacing:0.35px">4294.50</div>
<div class="a" style="left:1864px;top:394px;width:2px;height:1px;background:#444;"></div>
<div class="a t " style="left:1868px;top:388.0px;line-height:14px;font-size:12px;color:#fff;letter-spacing:0.35px">4294.00</div>
<div class="a" style="left:1864px;top:421px;width:2px;height:1px;background:#444;"></div>
<div class="a t " style="left:1868px;top:414.9px;line-height:14px;font-size:12px;color:#fff;letter-spacing:0.35px">4293.50</div>
<div class="a" style="left:1864px;top:448px;width:2px;height:1px;background:#444;"></div>
<div class="a t " style="left:1868px;top:441.8px;line-height:14px;font-size:12px;color:#fff;letter-spacing:0.35px">4293.00</div>
<div class="a" style="left:1864px;top:475px;width:2px;height:1px;background:#444;"></div>
<div class="a t " style="left:1868px;top:468.8px;line-height:14px;font-size:12px;color:#fff;letter-spacing:0.35px">4292.50</div>
<div class="a" style="left:1864px;top:502px;width:2px;height:1px;background:#444;"></div>
<div class="a t " style="left:1868px;top:495.7px;line-height:14px;font-size:12px;color:#fff;letter-spacing:0.35px">4292.00</div>
<div class="a" style="left:1864px;top:529px;width:2px;height:1px;background:#444;"></div>
<div class="a t " style="left:1868px;top:522.7px;line-height:14px;font-size:12px;color:#fff;letter-spacing:0.35px">4291.50</div>
<div class="a" style="left:1864px;top:556px;width:2px;height:1px;background:#444;"></div>
<div class="a t " style="left:1868px;top:549.6px;line-height:14px;font-size:12px;color:#fff;letter-spacing:0.35px">4291.00</div>
<div class="a" style="left:1864px;top:583px;width:2px;height:1px;background:#444;"></div>
<div class="a" style="left:1868px;top:576px;width:45px;height:16px;background:#fff;"></div>
<div class="a t " style="left:1868px;top:576.5px;line-height:14px;font-size:12px;color:#1a88d0;letter-spacing:0.35px">4290.50</div>
<div class="a" style="left:1864px;top:610px;width:2px;height:1px;background:#444;"></div>
<div class="a t " style="left:1868px;top:603.5px;line-height:14px;font-size:12px;color:#fff;letter-spacing:0.35px">4290.00</div>
<div class="a" style="left:1864px;top:637px;width:2px;height:1px;background:#444;"></div>
<div class="a t " style="left:1868px;top:630.4px;line-height:14px;font-size:12px;color:#fff;letter-spacing:0.35px">4289.50</div>
<div class="a" style="left:1864px;top:664px;width:2px;height:1px;background:#444;"></div>
<div class="a t " style="left:1868px;top:657.4px;line-height:14px;font-size:12px;color:#fff;letter-spacing:0.35px">4289.00</div>
<div class="a" style="left:1864px;top:691px;width:2px;height:1px;background:#444;"></div>
<div class="a t " style="left:1868px;top:684.3px;line-height:14px;font-size:12px;color:#fff;letter-spacing:0.35px">4288.50</div>
<div class="a" style="left:1864px;top:718px;width:2px;height:1px;background:#444;"></div>
<div class="a t " style="left:1868px;top:711.2px;line-height:14px;font-size:12px;color:#fff;letter-spacing:0.35px">4288.00</div>
<div class="a" style="left:1864px;top:745px;width:2px;height:1px;background:#444;"></div>
<div class="a t " style="left:1868px;top:738.2px;line-height:14px;font-size:12px;color:#fff;letter-spacing:0.35px">4287.50</div>
<div class="a" style="left:1864px;top:772px;width:2px;height:1px;background:#444;"></div>
<div class="a t " style="left:1868px;top:765.1px;line-height:14px;font-size:12px;color:#fff;letter-spacing:0.35px">4287.00</div>
<div class="a" style="left:1864px;top:799px;width:2px;height:1px;background:#444;"></div>
<div class="a t " style="left:1868px;top:792.1px;line-height:14px;font-size:12px;color:#fff;letter-spacing:0.35px">4286.50</div>
<div class="a" style="left:1864px;top:826px;width:2px;height:1px;background:#444;"></div>
<div class="a t " style="left:1868px;top:819.0px;line-height:14px;font-size:12px;color:#fff;letter-spacing:0.35px">4286.00</div>
<div class="a" style="left:1864px;top:852px;width:2px;height:1px;background:#444;"></div>
<div class="a t " style="left:1868px;top:845.9px;line-height:14px;font-size:12px;color:#fff;letter-spacing:0.35px">4285.50</div>
<div class="a" style="left:1864px;top:879px;width:2px;height:1px;background:#444;"></div>
<div class="a t " style="left:1868px;top:872.9px;line-height:14px;font-size:12px;color:#fff;letter-spacing:0.35px">4285.00</div>
<div class="a" style="left:1864px;top:906px;width:2px;height:1px;background:#444;"></div>
<div class="a t " style="left:1868px;top:899.8px;line-height:14px;font-size:12px;color:#fff;letter-spacing:0.35px">4284.50</div>
<div class="a" style="left:1864px;top:933px;width:2px;height:1px;background:#444;"></div>
<div class="a t " style="left:1868px;top:926.8px;line-height:14px;font-size:12px;color:#fff;letter-spacing:0.35px">4284.00</div>
<div class="a" style="left:1864px;top:960px;width:2px;height:1px;background:#444;"></div>
<div class="a t " style="left:1868px;top:953.7px;line-height:14px;font-size:12px;color:#fff;letter-spacing:0.35px">4283.50</div>
<div class="a" style="left:1380px;top:976px;width:484px;height:1px;background:#3a3a3a;"></div>
<div class="a" style="left:1390px;top:977px;width:1px;height:3px;background:#555;"></div>
<div class="a" style="left:1444px;top:977px;width:1px;height:3px;background:#555;"></div>
<div class="a" style="left:1488px;top:977px;width:1px;height:3px;background:#555;"></div>
<div class="a" style="left:1532px;top:977px;width:1px;height:3px;background:#555;"></div>
<div class="a" style="left:1576px;top:977px;width:1px;height:3px;background:#555;"></div>
<div class="a" style="left:1620px;top:977px;width:1px;height:3px;background:#555;"></div>
<div class="a" style="left:1664px;top:977px;width:1px;height:3px;background:#555;"></div>
<div class="a" style="left:1708px;top:977px;width:1px;height:3px;background:#555;"></div>
<div class="a" style="left:1752px;top:977px;width:1px;height:3px;background:#555;"></div>
<div class="a" style="left:1796px;top:977px;width:1px;height:3px;background:#555;"></div>
<div class="a" style="left:1851px;top:977px;width:1px;height:3px;background:#555;"></div>
<div class="a" style="left:1380px;top:980px;width:39px;height:16px;background:#fff;"></div>
<div class="a t " style="left:1379px;top:980.6px;line-height:14px;font-size:12px;color:#000;letter-spacing:0.8px">1-10-4</div>
<div class="a t" style="left:1414.0px;width:60px;text-align:center;top:980.6px;line-height:14px;font-size:12px;color:#fff;letter-spacing:0.9px">20:55</div>
<div class="a t" style="left:1458.0px;width:60px;text-align:center;top:980.6px;line-height:14px;font-size:12px;color:#fff;letter-spacing:0.9px">21:15</div>
<div class="a t" style="left:1502.0px;width:60px;text-align:center;top:980.6px;line-height:14px;font-size:12px;color:#fff;letter-spacing:0.9px">21:35</div>
<div class="a t" style="left:1546.0px;width:60px;text-align:center;top:980.6px;line-height:14px;font-size:12px;color:#fff;letter-spacing:0.9px">21:55</div>
<div class="a t" style="left:1590.0px;width:60px;text-align:center;top:980.6px;line-height:14px;font-size:12px;color:#fff;letter-spacing:0.9px">22:15</div>
<div class="a t" style="left:1634.0px;width:60px;text-align:center;top:980.6px;line-height:14px;font-size:12px;color:#fff;letter-spacing:0.9px">22:35</div>
<div class="a t" style="left:1678.0px;width:60px;text-align:center;top:980.6px;line-height:14px;font-size:12px;color:#fff;letter-spacing:0.9px">22:55</div>
<div class="a t" style="left:1722.5px;width:60px;text-align:center;top:980.6px;line-height:14px;font-size:12px;color:#fff;letter-spacing:0.9px">23:15</div>
<div class="a t" style="left:1766.5px;width:60px;text-align:center;top:980.6px;line-height:14px;font-size:12px;color:#fff;letter-spacing:0.9px">23:35</div>
<div class="a" style="left:1838px;top:980px;width:27px;height:16px;background:#fff;"></div>
<div class="a t " style="left:1839px;top:980.6px;line-height:14px;font-size:12px;color:#000;letter-spacing:0.8px">10-5</div>
<div class="a" style="left:1889px;top:979px;width:30px;height:16px;background:#00c000;"></div>
<div class="a t " style="left:1892.5px;top:980.3px;line-height:14px;font-size:12px;color:#fff;;letter-spacing:-0.422px">10 E</div>
<div class="a" style="left:1380px;top:134px;width:483px;height:16px;overflow:hidden">
<div class="a" style="left:160px;top:0px;width:72px;height:16px;background:#ff0000;"></div>
<div class="a t " style="left:5.399999999999999px;top:1.0px;line-height:14px;font-size:12px;color:#fff;;letter-spacing:0.386px">F.US.EPZ21[M]</div>
<div class="a t " style="left:100.7px;top:1.0px;line-height:14px;font-size:12px;color:#fff;;letter-spacing:0.591px">5 Min</div>
<div class="a t " style="left:142.8px;top:1.0px;line-height:14px;font-size:12px;color:#fff;;letter-spacing:-0.630px">#2</div>
<div class="a t " style="left:160.5px;top:1.0px;line-height:14px;font-size:12px;color:#200000;;letter-spacing:0.463px">DChg: -0.75</div>
<div class="a t " style="left:235.3px;top:1.0px;line-height:14px;font-size:12px;color:#ff1a1a;;letter-spacing:0.435px">DChg%: -0.02</div>
<div class="a t " style="left:320.4px;top:1.0px;line-height:14px;font-size:12px;color:#fff;;letter-spacing:0.111px">O: 4293.00</div>
<div class="a t " style="left:385.2px;top:1.0px;line-height:14px;font-size:12px;color:#fff;;letter-spacing:0.178px">H: 4294.25</div>
<div class="a t " style="left:450px;top:1.0px;line-height:14px;font-size:12px;color:#fff;;letter-spacing:0.128px">L: 4283.50</div>
</div>
<div class="a" style="left:1380px;top:996px;width:540px;height:17px;background:#f0f0f0;"></div>
<svg class="a" style="left:1384px;top:997px" width="12" height="14"><path d="M7.5 3.2 L3.8 7 L7.5 10.8" fill="none" stroke="#5a5a5a" stroke-width="2.3"/></svg>
<div class="a" style="left:1886px;top:997px;width:17px;height:15px;background:#cdcdcd;"></div>
<svg class="a" style="left:1907px;top:997px" width="12" height="14"><path d="M4 3.2 L7.7 7 L4 10.8" fill="none" stroke="#5a5a5a" stroke-width="2.3"/></svg>
<div class="a" style="left:566px;top:98px;width:315px;height:920px;background:#fff;border:1px solid #9a9a9a;box-shadow:1px 2px 4px rgba(0,0,0,0.25)"></div>
<svg class="a" style="left:574px;top:106px" width="16" height="14" viewBox="0 0 16 14"><rect x="0.5" y="0.5" width="14" height="12" rx="1" fill="#fafafa" stroke="#a4a8b0"/><rect x="1" y="1" width="13" height="1" fill="#c8ccd4"/><rect x="2" y="2.5" width="5" height="8" fill="url(#icg)"/><rect x="8.5" y="2.5" width="2.5" height="8" fill="#e2e2e2"/><rect x="12" y="2.5" width="2" height="4" fill="url(#icg2)"/></svg>
<div class="a t " style="left:595px;top:106.5px;line-height:14px;font-size:12px;color:#9a9a9a;;letter-spacing:-0.522px">#1 F.US.EPZ21  V: 5, 0  CV: ...</div>
<svg class="a" style="left:756px;top:104px" width="120" height="20"><line x1="7" y1="9.5" x2="17" y2="9.5" stroke="#888"/><rect x="52.5" y="4.5" width="9" height="9" fill="none" stroke="#d0d0d0"/><path d="M98 4 L108 14 M108 4 L98 14" stroke="#777" stroke-width="1.1"/></svg>
<div class="a t " style="left:573px;top:132.0px;line-height:14px;font-size:12px;color:#666;letter-spacing:-0.2px">Clear</div>
<div class="a t " style="left:614px;top:132.0px;line-height:14px;font-size:12px;color:#666;letter-spacing:-0.2px">Settings</div>
<div class="a" style="left:567px;top:147px;width:315px;height:872px;background:#f0f0f0;"></div>
<div class="a" style="left:569px;top:152px;width:311px;height:867px;background:#707070;"></div>
<div class="a" style="left:570px;top:153px;width:309px;height:865px;background:#000;"></div>
<div class="a" style="left:570px;top:155px;width:293px;height:24px;background:#a0a0a0;"></div>
<div class="a" style="left:570px;top:153px;width:293px;height:2px;background:#d8d8d8;"></div>
<div class="a" style="left:644px;top:153px;width:1px;height:2px;background:#909090;"></div>
<div class="a" style="left:715px;top:153px;width:1px;height:2px;background:#909090;"></div>
<div class="a" style="left:774px;top:153px;width:1px;height:2px;background:#909090;"></div>
<div class="a" style="left:850px;top:153px;width:1px;height:2px;background:#909090;"></div>
<div class="a t " style="left:577px;top:160.0px;line-height:14px;font-size:12px;color:#000;">Time</div>
<div class="a t " style="left:649px;top:160.0px;line-height:14px;font-size:12px;color:#000;">Price</div>
<div class="a t " style="left:719px;top:160.0px;line-height:14px;font-size:12px;color:#000;">Volume</div>
<div class="a t " style="left:779px;top:160.0px;line-height:14px;font-size:12px;color:#000;">Type</div>
<div class="a" style="left:570px;top:197px;width:293px;height:1px;background:#3c3c3c;"></div>
<div class="a t" style="left:573.5px;top:180px;line-height:17px;font-size:11.5px;color:#ff8066;letter-spacing:-0.35px;clip-path:inset(0 0 0px 0)">00:02:33</div>
<div class="a t" style="left:646px;top:180px;line-height:17px;font-size:11.5px;color:#ff8066;letter-spacing:-0.35px;clip-path:inset(0 0 0px 0)">4290.50</div>
<div class="a t" style="left:716.5px;top:180px;line-height:17px;font-size:11.5px;color:#ff8066;letter-spacing:-0.35px;clip-path:inset(0 0 0px 0)">10</div>
<div class="a t" style="left:776px;top:180px;line-height:17px;font-size:11.5px;color:#ff8066;letter-spacing:-0.35px;clip-path:inset(0 0 0px 0)">Bid Trade</div>
<div class="a" style="left:570px;top:198px;width:293px;height:19px;background:#ff80c0;"></div>
<div class="a" style="left:570px;top:216px;width:293px;height:1px;background:#3c3c3c;"></div>
<div class="a t" style="left:573.5px;top:199px;line-height:17px;font-size:11.5px;color:#1a0010;letter-spacing:-0.35px;clip-path:inset(0 0 0px 0)">00:02:29</div>
<div class="a t" style="left:646px;top:199px;line-height:17px;font-size:11.5px;color:#1a0010;letter-spacing:-0.35px;clip-path:inset(0 0 0px 0)">4289.50</div>
<div class="a t" style="left:716.5px;top:199px;line-height:17px;font-size:11.5px;color:#1a0010;letter-spacing:-0.35px;clip-path:inset(0 0 0px 0)">13</div>
<div class="a t" style="left:776px;top:199px;line-height:17px;font-size:11.5px;color:#1a0010;letter-spacing:-0.35px;clip-path:inset(0 0 0px 0)">Bid Trade</div>
<div class="a" style="left:570px;top:235px;width:293px;height:1px;background:#3c3c3c;"></div>
<div class="a t" style="left:573.5px;top:218px;line-height:17px;font-size:11.5px;color:#ff8066;letter-spacing:-0.35px;clip-path:inset(0 0 0px 0)">00:02:29</div>
<div class="a t" style="left:646px;top:218px;line-height:17px;font-size:11.5px;color:#ff8066;letter-spacing:-0.35px;clip-path:inset(0 0 0px 0)">4289.75</div>
<div class="a t" style="left:716.5px;top:218px;line-height:17px;font-size:11.5px;color:#ff8066;letter-spacing:-0.35px;clip-path:inset(0 0 0px 0)">8</div>
<div class="a t" style="left:776px;top:218px;line-height:17px;font-size:11.5px;color:#ff8066;letter-spacing:-0.35px;clip-path:inset(0 0 0px 0)">Bid Trade</div>
<div class="a" style="left:570px;top:254px;width:293px;height:1px;background:#3c3c3c;"></div>
<div class="a t" style="left:573.5px;top:237px;line-height:17px;font-size:11.5px;color:#44ee44;letter-spacing:-0.35px;clip-path:inset(0 0 0px 0)">00:02:29</div>
<div class="a t" style="left:646px;top:237px;line-height:17px;font-size:11.5px;color:#44ee44;letter-spacing:-0.35px;clip-path:inset(0 0 0px 0)">4290.00</div>
<div class="a t" style="left:716.5px;top:237px;line-height:17px;font-size:11.5px;color:#44ee44;letter-spacing:-0.35px;clip-path:inset(0 0 0px 0)">9</div>
<div class="a t" style="left:776px;top:237px;line-height:17px;font-size:11.5px;color:#44ee44;letter-spacing:-0.35px;clip-path:inset(0 0 0px 0)">Ask Trade</div>
<div class="a" style="left:570px;top:273px;width:293px;height:1px;background:#3c3c3c;"></div>
<div class="a t" style="left:573.5px;top:256px;line-height:17px;font-size:11.5px;color:#44ee44;letter-spacing:-0.35px;clip-path:inset(0 0 0px 0)">00:02:29</div>
<div class="a t" style="left:646px;top:256px;line-height:17px;font-size:11.5px;color:#44ee44;letter-spacing:-0.35px;clip-path:inset(0 0 0px 0)">4289.75</div>
<div class="a t" style="left:716.5px;top:256px;line-height:17px;font-size:11.5px;color:#44ee44;letter-spacing:-0.35px;clip-path:inset(0 0 0px 0)">15</div>
<div class="a t" style="left:776px;top:256px;line-height:17px;font-size:11.5px;color:#44ee44;letter-spacing:-0.35px;clip-path:inset(0 0 0px 0)">Ask Trade</div>
<div class="a" style="left:570px;top:292px;width:293px;height:1px;background:#3c3c3c;"></div>
<div class="a t" style="left:573.5px;top:275px;line-height:17px;font-size:11.5px;color:#44ee44;letter-spacing:-0.35px;clip-path:inset(0 0 0px 0)">00:02:29</div>
<div class="a t" style="left:646px;top:275px;line-height:17px;font-size:11.5px;color:#44ee44;letter-spacing:-0.35px;clip-path:inset(0 0 0px 0)">4289.75</div>
<div class="a t" style="left:716.5px;top:275px;line-height:17px;font-size:11.5px;color:#44ee44;letter-spacing:-0.35px;clip-path:inset(0 0 0px 0)">5</div>
<div class="a t" style="left:776px;top:275px;line-height:17px;font-size:11.5px;color:#44ee44;letter-spacing:-0.35px;clip-path:inset(0 0 0px 0)">Ask Trade</div>
<div class="a" style="left:570px;top:311px;width:293px;height:1px;background:#3c3c3c;"></div>
<div class="a t" style="left:573.5px;top:294px;line-height:17px;font-size:11.5px;color:#44ee44;letter-spacing:-0.35px;clip-path:inset(0 0 0px 0)">00:02:29</div>
<div class="a t" style="left:646px;top:294px;line-height:17px;font-size:11.5px;color:#44ee44;letter-spacing:-0.35px;clip-path:inset(0 0 0px 0)">4289.25</div>
<div class="a t" style="left:716.5px;top:294px;line-height:17px;font-size:11.5px;color:#44ee44;letter-spacing:-0.35px;clip-path:inset(0 0 0px 0)">6</div>
<div class="a t" style="left:776px;top:294px;line-height:17px;font-size:11.5px;color:#44ee44;letter-spacing:-0.35px;clip-path:inset(0 0 0px 0)">Ask Trade</div>
<div class="a" style="left:570px;top:330px;width:293px;height:1px;background:#3c3c3c;"></div>
<div class="a t" style="left:573.5px;top:313px;line-height:17px;font-size:11.5px;color:#44ee44;letter-spacing:-0.35px;clip-path:inset(0 0 0px 0)">00:02:26</div>
<div class="a t" style="left:646px;top:313px;line-height:17px;font-size:11.5px;color:#44ee44;letter-spacing:-0.35px;clip-path:inset(0 0 0px 0)">4289.50</div>
<div class="a t" style="left:716.5px;top:313px;line-height:17px;font-size:11.5px;color:#44ee44;letter-spacing:-0.35px;clip-path:inset(0 0 0px 0)">9</div>
<div class="a t" style="left:776px;top:313px;line-height:17px;font-size:11.5px;color:#44ee44;letter-spacing:-0.35px;clip-path:inset(0 0 0px 0)">Ask Trade</div>
<div class="a" style="left:570px;top:349px;width:293px;height:1px;background:#3c3c3c;"></div>
<div class="a t" style="left:573.5px;top:332px;line-height:17px;font-size:11.5px;color:#ff8066;letter-spacing:-0.35px;clip-path:inset(0 0 0px 0)">00:02:21</div>
<div class="a t" style="left:646px;top:332px;line-height:17px;font-size:11.5px;color:#ff8066;letter-spacing:-0.35px;clip-path:inset(0 0 0px 0)">4289.25</div>
<div class="a t" style="left:716.5px;top:332px;line-height:17px;font-size:11.5px;color:#ff8066;letter-spacing:-0.35px;clip-path:inset(0 0 0px 0)">5</div>
<div class="a t" style="left:776px;top:332px;line-height:17px;font-size:11.5px;color:#ff8066;letter-spacing:-0.35px;clip-path:inset(0 0 0px 0)">Bid Trade</div>
<div class="a" style="left:570px;top:368px;width:293px;height:1px;background:#3c3c3c;"></div>
<div class="a t" style="left:573.5px;top:351px;line-height:17px;font-size:11.5px;color:#44ee44;letter-spacing:-0.35px;clip-path:inset(0 0 0px 0)">00:02:20</div>
<div class="a t" style="left:646px;top:351px;line-height:17px;font-size:11.5px;color:#44ee44;letter-spacing:-0.35px;clip-path:inset(0 0 0px 0)">4289.50</div>
<div class="a t" style="left:716.5px;top:351px;line-height:17px;font-size:11.5px;color:#44ee44;letter-spacing:-0.35px;clip-path:inset(0 0 0px 0)">5</div>
<div class="a t" style="left:776px;top:351px;line-height:17px;font-size:11.5px;color:#44ee44;letter-spacing:-0.35px;clip-path:inset(0 0 0px 0)">Ask Trade</div>
<div class="a" style="left:570px;top:387px;width:293px;height:1px;background:#3c3c3c;"></div>
<div class="a t" style="left:573.5px;top:370px;line-height:17px;font-size:11.5px;color:#ff8066;letter-spacing:-0.35px;clip-path:inset(0 0 0px 0)">00:02:15</div>
<div class="a t" style="left:646px;top:370px;line-height:17px;font-size:11.5px;color:#ff8066;letter-spacing:-0.35px;clip-path:inset(0 0 0px 0)">4289.25</div>
<div class="a t" style="left:716.5px;top:370px;line-height:17px;font-size:11.5px;color:#ff8066;letter-spacing:-0.35px;clip-path:inset(0 0 0px 0)">5</div>
<div class="a t" style="left:776px;top:370px;line-height:17px;font-size:11.5px;color:#ff8066;letter-spacing:-0.35px;clip-path:inset(0 0 0px 0)">Bid Trade</div>
<div class="a" style="left:570px;top:406px;width:293px;height:1px;background:#3c3c3c;"></div>
<div class="a t" style="left:573.5px;top:389px;line-height:17px;font-size:11.5px;color:#44ee44;letter-spacing:-0.35px;clip-path:inset(0 0 0px 0)">00:02:15</div>
<div class="a t" style="left:646px;top:389px;line-height:17px;font-size:11.5px;color:#44ee44;letter-spacing:-0.35px;clip-path:inset(0 0 0px 0)">4289.25</div>
<div class="a t" style="left:716.5px;top:389px;line-height:17px;font-size:11.5px;color:#44ee44;letter-spacing:-0.35px;clip-path:inset(0 0 0px 0)">6</div>
<div class="a t" style="left:776px;top:389px;line-height:17px;font-size:11.5px;color:#44ee44;letter-spacing:-0.35px;clip-path:inset(0 0 0px 0)">Ask Trade</div>
<div class="a" style="left:570px;top:425px;width:293px;height:1px;background:#3c3c3c;"></div>
<div class="a t" style="left:573.5px;top:408px;line-height:17px;font-size:11.5px;color:#44ee44;letter-spacing:-0.35px;clip-path:inset(0 0 0px 0)">00:02:11</div>
<div class="a t" style="left:646px;top:408px;line-height:17px;font-size:11.5px;color:#44ee44;letter-spacing:-0.35px;clip-path:inset(0 0 0px 0)">4289.50</div>
<div class="a t" style="left:716.5px;top:408px;line-height:17px;font-size:11.5px;color:#44ee44;letter-spacing:-0.35px;clip-path:inset(0 0 0px 0)">5</div>
<div class="a t" style="left:776px;top:408px;line-height:17px;font-size:11.5px;color:#44ee44;letter-spacing:-0.35px;clip-path:inset(0 0 0px 0)">Ask Trade</div>
<div class="a" style="left:570px;top:444px;width:293px;height:1px;background:#3c3c3c;"></div>
<div class="a t" style="left:573.5px;top:427px;line-height:17px;font-size:11.5px;color:#44ee44;letter-spacing:-0.35px;clip-path:inset(0 0 0px 0)">00:02:11</div>
<div class="a t" style="left:646px;top:427px;line-height:17px;font-size:11.5px;color:#44ee44;letter-spacing:-0.35px;clip-path:inset(0 0 0px 0)">4289.25</div>
<div class="a t" style="left:716.5px;top:427px;line-height:17px;font-size:11.5px;color:#44ee44;letter-spacing:-0.35px;clip-path:inset(0 0 0px 0)">5</div>
<div class="a t" style="left:776px;top:427px;line-height:17px;font-size:11.5px;color:#44ee44;letter-spacing:-0.35px;clip-path:inset(0 0 0px 0)">Ask Trade</div>
<div class="a" style="left:570px;top:463px;width:293px;height:1px;background:#3c3c3c;"></div>
<div class="a t" style="left:573.5px;top:446px;line-height:17px;font-size:11.5px;color:#44ee44;letter-spacing:-0.35px;clip-path:inset(0 0 0px 0)">00:02:10</div>
<div class="a t" style="left:646px;top:446px;line-height:17px;font-size:11.5px;color:#44ee44;letter-spacing:-0.35px;clip-path:inset(0 0 0px 0)">4289.00</div>
<div class="a t" style="left:716.5px;top:446px;line-height:17px;font-size:11.5px;color:#44ee44;letter-spacing:-0.35px;clip-path:inset(0 0 0px 0)">5</div>
<div class="a t" style="left:776px;top:446px;line-height:17px;font-size:11.5px;color:#44ee44;letter-spacing:-0.35px;clip-path:inset(0 0 0px 0)">Ask Trade</div>
<div class="a" style="left:570px;top:482px;width:293px;height:1px;background:#3c3c3c;"></div>
<div class="a t" style="left:573.5px;top:465px;line-height:17px;font-size:11.5px;color:#ff8066;letter-spacing:-0.35px;clip-path:inset(0 0 0px 0)">00:02:10</div>
<div class="a t" style="left:646px;top:465px;line-height:17px;font-size:11.5px;color:#ff8066;letter-spacing:-0.35px;clip-path:inset(0 0 0px 0)">4289.00</div>
<div class="a t" style="left:716.5px;top:465px;line-height:17px;font-size:11.5px;color:#ff8066;letter-spacing:-0.35px;clip-path:inset(0 0 0px 0)">6</div>
<div class="a t" style="left:776px;top:465px;line-height:17px;font-size:11.5px;color:#ff8066;letter-spacing:-0.35px;clip-path:inset(0 0 0px 0)">Bid Trade</div>
<div class="a" style="left:570px;top:501px;width:293px;height:1px;background:#3c3c3c;"></div>
<div class="a t" style="left:573.5px;top:484px;line-height:17px;font-size:11.5px;color:#ff8066;letter-spacing:-0.35px;clip-path:inset(0 0 0px 0)">00:02:10</div>
<div class="a t" style="left:646px;top:484px;line-height:17px;font-size:11.5px;color:#ff8066;letter-spacing:-0.35px;clip-path:inset(0 0 0px 0)">4289.00</div>
<div class="a t" style="left:716.5px;top:484px;line-height:17px;font-size:11.5px;color:#ff8066;letter-spacing:-0.35px;clip-path:inset(0 0 0px 0)">6</div>
<div class="a t" style="left:776px;top:484px;line-height:17px;font-size:11.5px;color:#ff8066;letter-spacing:-0.35px;clip-path:inset(0 0 0px 0)">Bid Trade</div>
<div class="a" style="left:570px;top:520px;width:293px;height:1px;background:#3c3c3c;"></div>
<div class="a t" style="left:573.5px;top:503px;line-height:17px;font-size:11.5px;color:#ff8066;letter-spacing:-0.35px;clip-path:inset(0 0 0px 0)">00:02:08</div>
<div class="a t" style="left:646px;top:503px;line-height:17px;font-size:11.5px;color:#ff8066;letter-spacing:-0.35px;clip-path:inset(0 0 0px 0)">4289.00</div>
<div class="a t" style="left:716.5px;top:503px;line-height:17px;font-size:11.5px;color:#ff8066;letter-spacing:-0.35px;clip-path:inset(0 0 0px 0)">5</div>
<div class="a t" style="left:776px;top:503px;line-height:17px;font-size:11.5px;color:#ff8066;letter-spacing:-0.35px;clip-path:inset(0 0 0px 0)">Bid Trade</div>
<div class="a" style="left:570px;top:539px;width:293px;height:1px;background:#3c3c3c;"></div>
<div class="a t" style="left:573.5px;top:522px;line-height:17px;font-size:11.5px;color:#ff8066;letter-spacing:-0.35px;clip-path:inset(0 0 0px 0)">00:02:08</div>
<div class="a t" style="left:646px;top:522px;line-height:17px;font-size:11.5px;color:#ff8066;letter-spacing:-0.35px;clip-path:inset(0 0 0px 0)">4289.25</div>
<div class="a t" style="left:716.5px;top:522px;line-height:17px;font-size:11.5px;color:#ff8066;letter-spacing:-0.35px;clip-path:inset(0 0 0px 0)">10</div>
<div class="a t" style="left:776px;top:522px;line-height:17px;font-size:11.5px;color:#ff8066;letter-spacing:-0.35px;clip-path:inset(0 0 0px 0)">Bid Trade</div>
<div class="a" style="left:570px;top:558px;width:293px;height:1px;background:#3c3c3c;"></div>
<div class="a t" style="left:573.5px;top:541px;line-height:17px;font-size:11.5px;color:#ff8066;letter-spacing:-0.35px;clip-path:inset(0 0 0px 0)">00:02:08</div>
<div class="a t" style="left:646px;top:541px;line-height:17px;font-size:11.5px;color:#ff8066;letter-spacing:-0.35px;clip-path:inset(0 0 0px 0)">4289.50</div>
<div class="a t" style="left:716.5px;top:541px;line-height:17px;font-size:11.5px;color:#ff8066;letter-spacing:-0.35px;clip-path:inset(0 0 0px 0)">5</div>
<div class="a t" style="left:776px;top:541px;line-height:17px;font-size:11.5px;color:#ff8066;letter-spacing:-0.35px;clip-path:inset(0 0 0px 0)">Bid Trade</div>
<div class="a" style="left:570px;top:577px;width:293px;height:1px;background:#3c3c3c;"></div>
<div class="a t" style="left:573.5px;top:560px;line-height:17px;font-size:11.5px;color:#ff8066;letter-spacing:-0.35px;clip-path:inset(0 0 0px 0)">00:02:08</div>
<div class="a t" style="left:646px;top:560px;line-height:17px;font-size:11.5px;color:#ff8066;letter-spacing:-0.35px;clip-path:inset(0 0 0px 0)">4289.75</div>
<div class="a t" style="left:716.5px;top:560px;line-height:17px;font-size:11.5px;color:#ff8066;letter-spacing:-0.35px;clip-path:inset(0 0 0px 0)">6</div>
<div class="a t" style="left:776px;top:560px;line-height:17px;font-size:11.5px;color:#ff8066;letter-spacing:-0.35px;clip-path:inset(0 0 0px 0)">Bid Trade</div>
<div class="a" style="left:570px;top:596px;width:293px;height:1px;background:#3c3c3c;"></div>
<div class="a t" style="left:573.5px;top:579px;line-height:17px;font-size:11.5px;color:#ff8066;letter-spacing:-0.35px;clip-path:inset(0 0 0px 0)">00:02:05</div>
<div class="a t" style="left:646px;top:579px;line-height:17px;font-size:11.5px;color:#ff8066;letter-spacing:-0.35px;clip-path:inset(0 0 0px 0)">4290.25</div>
<div class="a t" style="left:716.5px;top:579px;line-height:17px;font-size:11.5px;color:#ff8066;letter-spacing:-0.35px;clip-path:inset(0 0 0px 0)">5</div>
<div class="a t" style="left:776px;top:579px;line-height:17px;font-size:11.5px;color:#ff8066;letter-spacing:-0.35px;clip-path:inset(0 0 0px 0)">Bid Trade</div>
<div class="a" style="left:570px;top:615px;width:293px;height:1px;background:#3c3c3c;"></div>
<div class="a t" style="left:573.5px;top:598px;line-height:17px;font-size:11.5px;color:#44ee44;letter-spacing:-0.35px;clip-path:inset(0 0 0px 0)">00:02:04</div>
<div class="a t" style="left:646px;top:598px;line-height:17px;font-size:11.5px;color:#44ee44;letter-spacing:-0.35px;clip-path:inset(0 0 0px 0)">4290.50</div>
<div class="a t" style="left:716.5px;top:598px;line-height:17px;font-size:11.5px;color:#44ee44;letter-spacing:-0.35px;clip-path:inset(0 0 0px 0)">5</div>
<div class="a t" style="left:776px;top:598px;line-height:17px;font-size:11.5px;color:#44ee44;letter-spacing:-0.35px;clip-path:inset(0 0 0px 0)">Ask Trade</div>
<div class="a" style="left:570px;top:634px;width:293px;height:1px;background:#3c3c3c;"></div>
<div class="a t" style="left:573.5px;top:617px;line-height:17px;font-size:11.5px;color:#ff8066;letter-spacing:-0.35px;clip-path:inset(0 0 0px 0)">00:02:01</div>
<div class="a t" style="left:646px;top:617px;line-height:17px;font-size:11.5px;color:#ff8066;letter-spacing:-0.35px;clip-path:inset(0 0 0px 0)">4291.00</div>
<div class="a t" style="left:716.5px;top:617px;line-height:17px;font-size:11.5px;color:#ff8066;letter-spacing:-0.35px;clip-path:inset(0 0 0px 0)">5</div>
<div class="a t" style="left:776px;top:617px;line-height:17px;font-size:11.5px;color:#ff8066;letter-spacing:-0.35px;clip-path:inset(0 0 0px 0)">Bid Trade</div>
<div class="a" style="left:570px;top:653px;width:293px;height:1px;background:#3c3c3c;"></div>
<div class="a t" style="left:573.5px;top:636px;line-height:17px;font-size:11.5px;color:#ff8066;letter-spacing:-0.35px;clip-path:inset(0 0 0px 0)">00:02:01</div>
<div class="a t" style="left:646px;top:636px;line-height:17px;font-size:11.5px;color:#ff8066;letter-spacing:-0.35px;clip-path:inset(0 0 0px 0)">4291.00</div>
<div class="a t" style="left:716.5px;top:636px;line-height:17px;font-size:11.5px;color:#ff8066;letter-spacing:-0.35px;clip-path:inset(0 0 0px 0)">10</div>
<div class="a t" style="left:776px;top:636px;line-height:17px;font-size:11.5px;color:#ff8066;letter-spacing:-0.35px;clip-path:inset(0 0 0px 0)">Bid Trade</div>
<div class="a" style="left:570px;top:672px;width:293px;height:1px;background:#3c3c3c;"></div>
<div class="a t" style="left:573.5px;top:655px;line-height:17px;font-size:11.5px;color:#44ee44;letter-spacing:-0.35px;clip-path:inset(0 0 0px 0)">00:02:00</div>
<div class="a t" style="left:646px;top:655px;line-height:17px;font-size:11.5px;color:#44ee44;letter-spacing:-0.35px;clip-path:inset(0 0 0px 0)">4290.75</div>
<div class="a t" style="left:716.5px;top:655px;line-height:17px;font-size:11.5px;color:#44ee44;letter-spacing:-0.35px;clip-path:inset(0 0 0px 0)">6</div>
<div class="a t" style="left:776px;top:655px;line-height:17px;font-size:11.5px;color:#44ee44;letter-spacing:-0.35px;clip-path:inset(0 0 0px 0)">Ask Trade</div>
<div class="a" style="left:570px;top:691px;width:293px;height:1px;background:#3c3c3c;"></div>
<div class="a t" style="left:573.5px;top:674px;line-height:17px;font-size:11.5px;color:#44ee44;letter-spacing:-0.35px;clip-path:inset(0 0 0px 0)">00:01:58</div>
<div class="a t" style="left:646px;top:674px;line-height:17px;font-size:11.5px;color:#44ee44;letter-spacing:-0.35px;clip-path:inset(0 0 0px 0)">4290.25</div>
<div class="a t" style="left:716.5px;top:674px;line-height:17px;font-size:11.5px;color:#44ee44;letter-spacing:-0.35px;clip-path:inset(0 0 0px 0)">8</div>
<div class="a t" style="left:776px;top:674px;line-height:17px;font-size:11.5px;color:#44ee44;letter-spacing:-0.35px;clip-path:inset(0 0 0px 0)">Ask Trade</div>
<div class="a" style="left:570px;top:710px;width:293px;height:1px;background:#3c3c3c;"></div>
<div class="a t" style="left:573.5px;top:693px;line-height:17px;font-size:11.5px;color:#ff8066;letter-spacing:-0.35px;clip-path:inset(0 0 0px 0)">00:01:57</div>
<div class="a t" style="left:646px;top:693px;line-height:17px;font-size:11.5px;color:#ff8066;letter-spacing:-0.35px;clip-path:inset(0 0 0px 0)">4290.25</div>
<div class="a t" style="left:716.5px;top:693px;line-height:17px;font-size:11.5px;color:#ff8066;letter-spacing:-0.35px;clip-path:inset(0 0 0px 0)">5</div>
<div class="a t" style="left:776px;top:693px;line-height:17px;font-size:11.5px;color:#ff8066;letter-spacing:-0.35px;clip-path:inset(0 0 0px 0)">Bid Trade</div>
<div class="a" style="left:570px;top:729px;width:293px;height:1px;background:#3c3c3c;"></div>
<div class="a t" style="left:573.5px;top:712px;line-height:17px;font-size:11.5px;color:#44ee44;letter-spacing:-0.35px;clip-path:inset(0 0 0px 0)">00:01:55</div>
<div class="a t" style="left:646px;top:712px;line-height:17px;font-size:11.5px;color:#44ee44;letter-spacing:-0.35px;clip-path:inset(0 0 0px 0)">4290.25</div>
<div class="a t" style="left:716.5px;top:712px;line-height:17px;font-size:11.5px;color:#44ee44;letter-spacing:-0.35px;clip-path:inset(0 0 0px 0)">7</div>
<div class="a t" style="left:776px;top:712px;line-height:17px;font-size:11.5px;color:#44ee44;letter-spacing:-0.35px;clip-path:inset(0 0 0px 0)">Ask Trade</div>
<div class="a" style="left:570px;top:748px;width:293px;height:1px;background:#3c3c3c;"></div>
<div class="a t" style="left:573.5px;top:731px;line-height:17px;font-size:11.5px;color:#44ee44;letter-spacing:-0.35px;clip-path:inset(0 0 0px 0)">00:01:52</div>
<div class="a t" style="left:646px;top:731px;line-height:17px;font-size:11.5px;color:#44ee44;letter-spacing:-0.35px;clip-path:inset(0 0 0px 0)">4290.25</div>
<div class="a t" style="left:716.5px;top:731px;line-height:17px;font-size:11.5px;color:#44ee44;letter-spacing:-0.35px;clip-path:inset(0 0 0px 0)">7</div>
<div class="a t" style="left:776px;top:731px;line-height:17px;font-size:11.5px;color:#44ee44;letter-spacing:-0.35px;clip-path:inset(0 0 0px 0)">Ask Trade</div>
<div class="a" style="left:570px;top:767px;width:293px;height:1px;background:#3c3c3c;"></div>
<div class="a t" style="left:573.5px;top:750px;line-height:17px;font-size:11.5px;color:#44ee44;letter-spacing:-0.35px;clip-path:inset(0 0 0px 0)">00:01:50</div>
<div class="a t" style="left:646px;top:750px;line-height:17px;font-size:11.5px;color:#44ee44;letter-spacing:-0.35px;clip-path:inset(0 0 0px 0)">4290.25</div>
<div class="a t" style="left:716.5px;top:750px;line-height:17px;font-size:11.5px;color:#44ee44;letter-spacing:-0.35px;clip-path:inset(0 0 0px 0)">7</div>
<div class="a t" style="left:776px;top:750px;line-height:17px;font-size:11.5px;color:#44ee44;letter-spacing:-0.35px;clip-path:inset(0 0 0px 0)">Ask Trade</div>
<div class="a" style="left:570px;top:768px;width:293px;height:19px;background:#ff80c0;"></div>
<div class="a" style="left:570px;top:786px;width:293px;height:1px;background:#3c3c3c;"></div>
<div class="a t" style="left:573.5px;top:769px;line-height:17px;font-size:11.5px;color:#1a0010;letter-spacing:-0.35px;clip-path:inset(0 0 0px 0)">00:01:50</div>
<div class="a t" style="left:646px;top:769px;line-height:17px;font-size:11.5px;color:#1a0010;letter-spacing:-0.35px;clip-path:inset(0 0 0px 0)">4289.75</div>
<div class="a t" style="left:716.5px;top:769px;line-height:17px;font-size:11.5px;color:#1a0010;letter-spacing:-0.35px;clip-path:inset(0 0 0px 0)">20</div>
<div class="a t" style="left:776px;top:769px;line-height:17px;font-size:11.5px;color:#1a0010;letter-spacing:-0.35px;clip-path:inset(0 0 0px 0)">Bid Trade</div>
<div class="a" style="left:570px;top:787px;width:293px;height:19px;background:#ff80c0;"></div>
<div class="a" style="left:570px;top:805px;width:293px;height:1px;background:#3c3c3c;"></div>
<div class="a t" style="left:573.5px;top:788px;line-height:17px;font-size:11.5px;color:#1a0010;letter-spacing:-0.35px;clip-path:inset(0 0 0px 0)">00:01:50</div>
<div class="a t" style="left:646px;top:788px;line-height:17px;font-size:11.5px;color:#1a0010;letter-spacing:-0.35px;clip-path:inset(0 0 0px 0)">4290.00</div>
<div class="a t" style="left:716.5px;top:788px;line-height:17px;font-size:11.5px;color:#1a0010;letter-spacing:-0.35px;clip-path:inset(0 0 0px 0)">26</div>
<div class="a t" style="left:776px;top:788px;line-height:17px;font-size:11.5px;color:#1a0010;letter-spacing:-0.35px;clip-path:inset(0 0 0px 0)">Bid Trade</div>
<div class="a" style="left:570px;top:806px;width:293px;height:19px;background:#ff80c0;"></div>
<div class="a" style="left:570px;top:824px;width:293px;height:1px;background:#3c3c3c;"></div>
<div class="a t" style="left:573.5px;top:807px;line-height:17px;font-size:11.5px;color:#1a0010;letter-spacing:-0.35px;clip-path:inset(0 0 0px 0)">00:01:50</div>
<div class="a t" style="left:646px;top:807px;line-height:17px;font-size:11.5px;color:#1a0010;letter-spacing:-0.35px;clip-path:inset(0 0 0px 0)">4290.25</div>
<div class="a t" style="left:716.5px;top:807px;line-height:17px;font-size:11.5px;color:#1a0010;letter-spacing:-0.35px;clip-path:inset(0 0 0px 0)">19</div>
<div class="a t" style="left:776px;top:807px;line-height:17px;font-size:11.5px;color:#1a0010;letter-spacing:-0.35px;clip-path:inset(0 0 0px 0)">Bid Trade</div>
<div class="a" style="left:570px;top:843px;width:293px;height:1px;background:#3c3c3c;"></div>
<div class="a t" style="left:573.5px;top:826px;line-height:17px;font-size:11.5px;color:#ff8066;letter-spacing:-0.35px;clip-path:inset(0 0 0px 0)">00:01:50</div>
<div class="a t" style="left:646px;top:826px;line-height:17px;font-size:11.5px;color:#ff8066;letter-spacing:-0.35px;clip-path:inset(0 0 0px 0)">4290.50</div>
<div class="a t" style="left:716.5px;top:826px;line-height:17px;font-size:11.5px;color:#ff8066;letter-spacing:-0.35px;clip-path:inset(0 0 0px 0)">15</div>
<div class="a t" style="left:776px;top:826px;line-height:17px;font-size:11.5px;color:#ff8066;letter-spacing:-0.35px;clip-path:inset(0 0 0px 0)">Bid Trade</div>
<div class="a" style="left:570px;top:862px;width:293px;height:1px;background:#3c3c3c;"></div>
<div class="a t" style="left:573.5px;top:845px;line-height:17px;font-size:11.5px;color:#44ee44;letter-spacing:-0.35px;clip-path:inset(0 0 0px 0)">00:01:49</div>
<div class="a t" style="left:646px;top:845px;line-height:17px;font-size:11.5px;color:#44ee44;letter-spacing:-0.35px;clip-path:inset(0 0 0px 0)">4290.75</div>
<div class="a t" style="left:716.5px;top:845px;line-height:17px;font-size:11.5px;color:#44ee44;letter-spacing:-0.35px;clip-path:inset(0 0 0px 0)">6</div>
<div class="a t" style="left:776px;top:845px;line-height:17px;font-size:11.5px;color:#44ee44;letter-spacing:-0.35px;clip-path:inset(0 0 0px 0)">Ask Trade</div>
<div class="a" style="left:570px;top:881px;width:293px;height:1px;background:#3c3c3c;"></div>
<div class="a t" style="left:573.5px;top:864px;line-height:17px;font-size:11.5px;color:#44ee44;letter-spacing:-0.35px;clip-path:inset(0 0 0px 0)">00:01:48</div>
<div class="a t" style="left:646px;top:864px;line-height:17px;font-size:11.5px;color:#44ee44;letter-spacing:-0.35px;clip-path:inset(0 0 0px 0)">4290.25</div>
<div class="a t" style="left:716.5px;top:864px;line-height:17px;font-size:11.5px;color:#44ee44;letter-spacing:-0.35px;clip-path:inset(0 0 0px 0)">10</div>
<div class="a t" style="left:776px;top:864px;line-height:17px;font-size:11.5px;color:#44ee44;letter-spacing:-0.35px;clip-path:inset(0 0 0px 0)">Ask Trade</div>
<div class="a" style="left:570px;top:900px;width:293px;height:1px;background:#3c3c3c;"></div>
<div class="a t" style="left:573.5px;top:883px;line-height:17px;font-size:11.5px;color:#44ee44;letter-spacing:-0.35px;clip-path:inset(0 0 0px 0)">00:01:47</div>
<div class="a t" style="left:646px;top:883px;line-height:17px;font-size:11.5px;color:#44ee44;letter-spacing:-0.35px;clip-path:inset(0 0 0px 0)">4290.00</div>
<div class="a t" style="left:716.5px;top:883px;line-height:17px;font-size:11.5px;color:#44ee44;letter-spacing:-0.35px;clip-path:inset(0 0 0px 0)">6</div>
<div class="a t" style="left:776px;top:883px;line-height:17px;font-size:11.5px;color:#44ee44;letter-spacing:-0.35px;clip-path:inset(0 0 0px 0)">Ask Trade</div>
<div class="a" style="left:570px;top:919px;width:293px;height:1px;background:#3c3c3c;"></div>
<div class="a t" style="left:573.5px;top:902px;line-height:17px;font-size:11.5px;color:#ff8066;letter-spacing:-0.35px;clip-path:inset(0 0 0px 0)">00:01:46</div>
<div class="a t" style="left:646px;top:902px;line-height:17px;font-size:11.5px;color:#ff8066;letter-spacing:-0.35px;clip-path:inset(0 0 0px 0)">4290.00</div>
<div class="a t" style="left:716.5px;top:902px;line-height:17px;font-size:11.5px;color:#ff8066;letter-spacing:-0.35px;clip-path:inset(0 0 0px 0)">7</div>
<div class="a t" style="left:776px;top:902px;line-height:17px;font-size:11.5px;color:#ff8066;letter-spacing:-0.35px;clip-path:inset(0 0 0px 0)">Bid Trade</div>
<div class="a" style="left:570px;top:920px;width:293px;height:19px;background:#ff80c0;"></div>
<div class="a" style="left:570px;top:938px;width:293px;height:1px;background:#3c3c3c;"></div>
<div class="a t" style="left:573.5px;top:921px;line-height:17px;font-size:11.5px;color:#1a0010;letter-spacing:-0.35px;clip-path:inset(0 0 0px 0)">00:01:44</div>
<div class="a t" style="left:646px;top:921px;line-height:17px;font-size:11.5px;color:#1a0010;letter-spacing:-0.35px;clip-path:inset(0 0 0px 0)">4290.25</div>
<div class="a t" style="left:716.5px;top:921px;line-height:17px;font-size:11.5px;color:#1a0010;letter-spacing:-0.35px;clip-path:inset(0 0 0px 0)">8</div>
<div class="a t" style="left:776px;top:921px;line-height:17px;font-size:11.5px;color:#1a0010;letter-spacing:-0.35px;clip-path:inset(0 0 0px 0)">Bid Trade</div>
<div class="a" style="left:570px;top:957px;width:293px;height:1px;background:#3c3c3c;"></div>
<div class="a t" style="left:573.5px;top:940px;line-height:17px;font-size:11.5px;color:#ff8066;letter-spacing:-0.35px;clip-path:inset(0 0 0px 0)">00:01:43</div>
<div class="a t" style="left:646px;top:940px;line-height:17px;font-size:11.5px;color:#ff8066;letter-spacing:-0.35px;clip-path:inset(0 0 0px 0)">4290.75</div>
<div class="a t" style="left:716.5px;top:940px;line-height:17px;font-size:11.5px;color:#ff8066;letter-spacing:-0.35px;clip-path:inset(0 0 0px 0)">10</div>
<div class="a t" style="left:776px;top:940px;line-height:17px;font-size:11.5px;color:#ff8066;letter-spacing:-0.35px;clip-path:inset(0 0 0px 0)">Bid Trade</div>
<div class="a" style="left:570px;top:976px;width:293px;height:1px;background:#3c3c3c;"></div>
<div class="a t" style="left:573.5px;top:959px;line-height:17px;font-size:11.5px;color:#ff8066;letter-spacing:-0.35px;clip-path:inset(0 0 0px 0)">00:01:37</div>
<div class="a t" style="left:646px;top:959px;line-height:17px;font-size:11.5px;color:#ff8066;letter-spacing:-0.35px;clip-path:inset(0 0 0px 0)">4291.75</div>
<div class="a t" style="left:716.5px;top:959px;line-height:17px;font-size:11.5px;color:#ff8066;letter-spacing:-0.35px;clip-path:inset(0 0 0px 0)">6</div>
<div class="a t" style="left:776px;top:959px;line-height:17px;font-size:11.5px;color:#ff8066;letter-spacing:-0.35px;clip-path:inset(0 0 0px 0)">Bid Trade</div>
<div class="a" style="left:570px;top:995px;width:293px;height:1px;background:#3c3c3c;"></div>
<div class="a t" style="left:573.5px;top:978px;line-height:17px;font-size:11.5px;color:#ff8066;letter-spacing:-0.35px;clip-path:inset(0 0 0px 0)">00:01:35</div>
<div class="a t" style="left:646px;top:978px;line-height:17px;font-size:11.5px;color:#ff8066;letter-spacing:-0.35px;clip-path:inset(0 0 0px 0)">4291.50</div>
<div class="a t" style="left:716.5px;top:978px;line-height:17px;font-size:11.5px;color:#ff8066;letter-spacing:-0.35px;clip-path:inset(0 0 0px 0)">5</div>
<div class="a t" style="left:776px;top:978px;line-height:17px;font-size:11.5px;color:#ff8066;letter-spacing:-0.35px;clip-path:inset(0 0 0px 0)">Bid Trade</div>
<div class="a" style="left:570px;top:1014px;width:293px;height:1px;background:#3c3c3c;"></div>
<div class="a t" style="left:573.5px;top:997px;line-height:17px;font-size:11.5px;color:#44ee44;letter-spacing:-0.35px;clip-path:inset(0 0 0px 0)">00:01:35</div>
<div class="a t" style="left:646px;top:997px;line-height:17px;font-size:11.5px;color:#44ee44;letter-spacing:-0.35px;clip-path:inset(0 0 0px 0)">4291.75</div>
<div class="a t" style="left:716.5px;top:997px;line-height:17px;font-size:11.5px;color:#44ee44;letter-spacing:-0.35px;clip-path:inset(0 0 0px 0)">10</div>
<div class="a t" style="left:776px;top:997px;line-height:17px;font-size:11.5px;color:#44ee44;letter-spacing:-0.35px;clip-path:inset(0 0 0px 0)">Ask Trade</div>
<div class="a" style="left:644px;top:179px;width:1px;height:839px;background:#3c3c3c;"></div>
<div class="a" style="left:715px;top:179px;width:1px;height:839px;background:#3c3c3c;"></div>
<div class="a" style="left:774px;top:179px;width:1px;height:839px;background:#3c3c3c;"></div>
<div class="a" style="left:850px;top:179px;width:1px;height:839px;background:#3c3c3c;"></div>
<div class="a" style="left:863px;top:153px;width:17px;height:865px;background:#f0f0f0;"></div>
<svg class="a" style="left:863px;top:157px" width="17" height="14"><path d="M4.5 9 L8.5 5 L12.5 9" fill="none" stroke="#555" stroke-width="1.6"/></svg>
<div class="a" style="left:865px;top:171px;width:14px;height:17px;background:#cdcdcd;"></div>
<svg class="a" style="left:863px;top:1003px" width="17" height="14"><path d="M4.5 5 L8.5 9 L12.5 5" fill="none" stroke="#555" stroke-width="1.6"/></svg>
<div class="a" style="left:1054px;top:103px;width:316px;height:909px;background:#fff;border:1px solid #9a9a9a;box-shadow:1px 2px 4px rgba(0,0,0,0.25)"></div>
<svg class="a" style="left:1063px;top:111px" width="16" height="14" viewBox="0 0 16 14"><rect x="0.5" y="0.5" width="14" height="12" rx="1" fill="#fafafa" stroke="#a4a8b0"/><rect x="1" y="1" width="13" height="1" fill="#c8ccd4"/><rect x="2" y="2.5" width="5" height="8" fill="url(#icg)"/><rect x="8.5" y="2.5" width="2.5" height="8" fill="#e2e2e2"/><rect x="12" y="2.5" width="2" height="4" fill="url(#icg2)"/></svg>
<div class="a t " style="left:1084px;top:111.5px;line-height:14px;font-size:12px;color:#9a9a9a;;letter-spacing:-0.522px">#2 F.US.EPZ21  V: 5, 0  CV: ...</div>
<svg class="a" style="left:1245px;top:109px" width="120" height="20"><line x1="7" y1="9.5" x2="17" y2="9.5" stroke="#888"/><rect x="52.5" y="4.5" width="9" height="9" fill="none" stroke="#d0d0d0"/><path d="M98 4 L108 14 M108 4 L98 14" stroke="#777" stroke-width="1.1"/></svg>
<div class="a t " style="left:1062px;top:137.0px;line-height:14px;font-size:12px;color:#666;letter-spacing:-0.2px">Clear</div>
<div class="a t " style="left:1103px;top:137.0px;line-height:14px;font-size:12px;color:#666;letter-spacing:-0.2px">Settings</div>
<div class="a" style="left:1056px;top:152px;width:315px;height:861px;background:#f0f0f0;"></div>
<div class="a" style="left:1058px;top:157px;width:311px;height:856px;background:#707070;"></div>
<div class="a" style="left:1059px;top:158px;width:309px;height:854px;background:#000;"></div>
<div class="a" style="left:1059px;top:160px;width:293px;height:24px;background:#a0a0a0;"></div>
<div class="a" style="left:1059px;top:158px;width:293px;height:2px;background:#d8d8d8;"></div>
<div class="a" style="left:1133px;top:158px;width:1px;height:2px;background:#909090;"></div>
<div class="a" style="left:1204px;top:158px;width:1px;height:2px;background:#909090;"></div>
<div class="a" style="left:1263px;top:158px;width:1px;height:2px;background:#909090;"></div>
<div class="a" style="left:1339px;top:158px;width:1px;height:2px;background:#909090;"></div>
<div class="a t " style="left:1066px;top:165.0px;line-height:14px;font-size:12px;color:#000;">Time</div>
<div class="a t " style="left:1138px;top:165.0px;line-height:14px;font-size:12px;color:#000;">Price</div>
<div class="a t " style="left:1208px;top:165.0px;line-height:14px;font-size:12px;color:#000;">Volume</div>
<div class="a t " style="left:1268px;top:165.0px;line-height:14px;font-size:12px;color:#000;">Type</div>
<div class="a" style="left:1059px;top:202px;width:293px;height:1px;background:#3c3c3c;"></div>
<div class="a t" style="left:1062.5px;top:185px;line-height:17px;font-size:11.5px;color:#ff8066;letter-spacing:-0.35px;clip-path:inset(0 0 0px 0)">00:02:33</div>
<div class="a t" style="left:1135px;top:185px;line-height:17px;font-size:11.5px;color:#ff8066;letter-spacing:-0.35px;clip-path:inset(0 0 0px 0)">4290.50</div>
<div class="a t" style="left:1205.5px;top:185px;line-height:17px;font-size:11.5px;color:#ff8066;letter-spacing:-0.35px;clip-path:inset(0 0 0px 0)">10</div>
<div class="a t" style="left:1265px;top:185px;line-height:17px;font-size:11.5px;color:#ff8066;letter-spacing:-0.35px;clip-path:inset(0 0 0px 0)">Bid Trade</div>
<div class="a" style="left:1059px;top:203px;width:293px;height:19px;background:#ff80c0;"></div>
<div class="a" style="left:1059px;top:221px;width:293px;height:1px;background:#3c3c3c;"></div>
<div class="a t" style="left:1062.5px;top:204px;line-height:17px;font-size:11.5px;color:#1a0010;letter-spacing:-0.35px;clip-path:inset(0 0 0px 0)">00:02:29</div>
<div class="a t" style="left:1135px;top:204px;line-height:17px;font-size:11.5px;color:#1a0010;letter-spacing:-0.35px;clip-path:inset(0 0 0px 0)">4289.50</div>
<div class="a t" style="left:1205.5px;top:204px;line-height:17px;font-size:11.5px;color:#1a0010;letter-spacing:-0.35px;clip-path:inset(0 0 0px 0)">13</div>
<div class="a t" style="left:1265px;top:204px;line-height:17px;font-size:11.5px;color:#1a0010;letter-spacing:-0.35px;clip-path:inset(0 0 0px 0)">Bid Trade</div>
<div class="a" style="left:1059px;top:240px;width:293px;height:1px;background:#3c3c3c;"></div>
<div class="a t" style="left:1062.5px;top:223px;line-height:17px;font-size:11.5px;color:#ff8066;letter-spacing:-0.35px;clip-path:inset(0 0 0px 0)">00:02:29</div>
<div class="a t" style="left:1135px;top:223px;line-height:17px;font-size:11.5px;color:#ff8066;letter-spacing:-0.35px;clip-path:inset(0 0 0px 0)">4289.75</div>
<div class="a t" style="left:1205.5px;top:223px;line-height:17px;font-size:11.5px;color:#ff8066;letter-spacing:-0.35px;clip-path:inset(0 0 0px 0)">8</div>
<div class="a t" style="left:1265px;top:223px;line-height:17px;font-size:11.5px;color:#ff8066;letter-spacing:-0.35px;clip-path:inset(0 0 0px 0)">Bid Trade</div>
<div class="a" style="left:1059px;top:259px;width:293px;height:1px;background:#3c3c3c;"></div>
<div class="a t" style="left:1062.5px;top:242px;line-height:17px;font-size:11.5px;color:#44ee44;letter-spacing:-0.35px;clip-path:inset(0 0 0px 0)">00:02:29</div>
<div class="a t" style="left:1135px;top:242px;line-height:17px;font-size:11.5px;color:#44ee44;letter-spacing:-0.35px;clip-path:inset(0 0 0px 0)">4290.00</div>
<div class="a t" style="left:1205.5px;top:242px;line-height:17px;font-size:11.5px;color:#44ee44;letter-spacing:-0.35px;clip-path:inset(0 0 0px 0)">9</div>
<div class="a t" style="left:1265px;top:242px;line-height:17px;font-size:11.5px;color:#44ee44;letter-spacing:-0.35px;clip-path:inset(0 0 0px 0)">Ask Trade</div>
<div class="a" style="left:1059px;top:278px;width:293px;height:1px;background:#3c3c3c;"></div>
<div class="a t" style="left:1062.5px;top:261px;line-height:17px;font-size:11.5px;color:#44ee44;letter-spacing:-0.35px;clip-path:inset(0 0 0px 0)">00:02:29</div>
<div class="a t" style="left:1135px;top:261px;line-height:17px;font-size:11.5px;color:#44ee44;letter-spacing:-0.35px;clip-path:inset(0 0 0px 0)">4289.75</div>
<div class="a t" style="left:1205.5px;top:261px;line-height:17px;font-size:11.5px;color:#44ee44;letter-spacing:-0.35px;clip-path:inset(0 0 0px 0)">15</div>
<div class="a t" style="left:1265px;top:261px;line-height:17px;font-size:11.5px;color:#44ee44;letter-spacing:-0.35px;clip-path:inset(0 0 0px 0)">Ask Trade</div>
<div class="a" style="left:1059px;top:297px;width:293px;height:1px;background:#3c3c3c;"></div>
<div class="a t" style="left:1062.5px;top:280px;line-height:17px;font-size:11.5px;color:#44ee44;letter-spacing:-0.35px;clip-path:inset(0 0 0px 0)">00:02:29</div>
<div class="a t" style="left:1135px;top:280px;line-height:17px;font-size:11.5px;color:#44ee44;letter-spacing:-0.35px;clip-path:inset(0 0 0px 0)">4289.75</div>
<div class="a t" style="left:1205.5px;top:280px;line-height:17px;font-size:11.5px;color:#44ee44;letter-spacing:-0.35px;clip-path:inset(0 0 0px 0)">5</div>
<div class="a t" style="left:1265px;top:280px;line-height:17px;font-size:11.5px;color:#44ee44;letter-spacing:-0.35px;clip-path:inset(0 0 0px 0)">Ask Trade</div>
<div class="a" style="left:1059px;top:316px;width:293px;height:1px;background:#3c3c3c;"></div>
<div class="a t" style="left:1062.5px;top:299px;line-height:17px;font-size:11.5px;color:#44ee44;letter-spacing:-0.35px;clip-path:inset(0 0 0px 0)">00:02:29</div>
<div class="a t" style="left:1135px;top:299px;line-height:17px;font-size:11.5px;color:#44ee44;letter-spacing:-0.35px;clip-path:inset(0 0 0px 0)">4289.25</div>
<div class="a t" style="left:1205.5px;top:299px;line-height:17px;font-size:11.5px;color:#44ee44;letter-spacing:-0.35px;clip-path:inset(0 0 0px 0)">6</div>
<div class="a t" style="left:1265px;top:299px;line-height:17px;font-size:11.5px;color:#44ee44;letter-spacing:-0.35px;clip-path:inset(0 0 0px 0)">Ask Trade</div>
<div class="a" style="left:1059px;top:335px;width:293px;height:1px;background:#3c3c3c;"></div>
<div class="a t" style="left:1062.5px;top:318px;line-height:17px;font-size:11.5px;color:#44ee44;letter-spacing:-0.35px;clip-path:inset(0 0 0px 0)">00:02:26</div>
<div class="a t" style="left:1135px;top:318px;line-height:17px;font-size:11.5px;color:#44ee44;letter-spacing:-0.35px;clip-path:inset(0 0 0px 0)">4289.50</div>
<div class="a t" style="left:1205.5px;top:318px;line-height:17px;font-size:11.5px;color:#44ee44;letter-spacing:-0.35px;clip-path:inset(0 0 0px 0)">9</div>
<div class="a t" style="left:1265px;top:318px;line-height:17px;font-size:11.5px;color:#44ee44;letter-spacing:-0.35px;clip-path:inset(0 0 0px 0)">Ask Trade</div>
<div class="a" style="left:1059px;top:354px;width:293px;height:1px;background:#3c3c3c;"></div>
<div class="a t" style="left:1062.5px;top:337px;line-height:17px;font-size:11.5px;color:#ff8066;letter-spacing:-0.35px;clip-path:inset(0 0 0px 0)">00:02:21</div>
<div class="a t" style="left:1135px;top:337px;line-height:17px;font-size:11.5px;color:#ff8066;letter-spacing:-0.35px;clip-path:inset(0 0 0px 0)">4289.25</div>
<div class="a t" style="left:1205.5px;top:337px;line-height:17px;font-size:11.5px;color:#ff8066;letter-spacing:-0.35px;clip-path:inset(0 0 0px 0)">5</div>
<div class="a t" style="left:1265px;top:337px;line-height:17px;font-size:11.5px;color:#ff8066;letter-spacing:-0.35px;clip-path:inset(0 0 0px 0)">Bid Trade</div>
<div class="a" style="left:1059px;top:373px;width:293px;height:1px;background:#3c3c3c;"></div>
<div class="a t" style="left:1062.5px;top:356px;line-height:17px;font-size:11.5px;color:#44ee44;letter-spacing:-0.35px;clip-path:inset(0 0 0px 0)">00:02:20</div>
<div class="a t" style="left:1135px;top:356px;line-height:17px;font-size:11.5px;color:#44ee44;letter-spacing:-0.35px;clip-path:inset(0 0 0px 0)">4289.50</div>
<div class="a t" style="left:1205.5px;top:356px;line-height:17px;font-size:11.5px;color:#44ee44;letter-spacing:-0.35px;clip-path:inset(0 0 0px 0)">5</div>
<div class="a t" style="left:1265px;top:356px;line-height:17px;font-size:11.5px;color:#44ee44;letter-spacing:-0.35px;clip-path:inset(0 0 0px 0)">Ask Trade</div>
<div class="a" style="left:1059px;top:392px;width:293px;height:1px;background:#3c3c3c;"></div>
<div class="a t" style="left:1062.5px;top:375px;line-height:17px;font-size:11.5px;color:#ff8066;letter-spacing:-0.35px;clip-path:inset(0 0 0px 0)">00:02:15</div>
<div class="a t" style="left:1135px;top:375px;line-height:17px;font-size:11.5px;color:#ff8066;letter-spacing:-0.35px;clip-path:inset(0 0 0px 0)">4289.25</div>
<div class="a t" style="left:1205.5px;top:375px;line-height:17px;font-size:11.5px;color:#ff8066;letter-spacing:-0.35px;clip-path:inset(0 0 0px 0)">5</div>
<div class="a t" style="left:1265px;top:375px;line-height:17px;font-size:11.5px;color:#ff8066;letter-spacing:-0.35px;clip-path:inset(0 0 0px 0)">Bid Trade</div>
<div class="a" style="left:1059px;top:411px;width:293px;height:1px;background:#3c3c3c;"></div>
<div class="a t" style="left:1062.5px;top:394px;line-height:17px;font-size:11.5px;color:#44ee44;letter-spacing:-0.35px;clip-path:inset(0 0 0px 0)">00:02:15</div>
<div class="a t" style="left:1135px;top:394px;line-height:17px;font-size:11.5px;color:#44ee44;letter-spacing:-0.35px;clip-path:inset(0 0 0px 0)">4289.25</div>
<div class="a t" style="left:1205.5px;top:394px;line-height:17px;font-size:11.5px;color:#44ee44;letter-spacing:-0.35px;clip-path:inset(0 0 0px 0)">6</div>
<div class="a t" style="left:1265px;top:394px;line-height:17px;font-size:11.5px;color:#44ee44;letter-spacing:-0.35px;clip-path:inset(0 0 0px 0)">Ask Trade</div>
<div class="a" style="left:1059px;top:430px;width:293px;height:1px;background:#3c3c3c;"></div>
<div class="a t" style="left:1062.5px;top:413px;line-height:17px;font-size:11.5px;color:#44ee44;letter-spacing:-0.35px;clip-path:inset(0 0 0px 0)">00:02:11</div>
<div class="a t" style="left:1135px;top:413px;line-height:17px;font-size:11.5px;color:#44ee44;letter-spacing:-0.35px;clip-path:inset(0 0 0px 0)">4289.50</div>
<div class="a t" style="left:1205.5px;top:413px;line-height:17px;font-size:11.5px;color:#44ee44;letter-spacing:-0.35px;clip-path:inset(0 0 0px 0)">5</div>
<div class="a t" style="left:1265px;top:413px;line-height:17px;font-size:11.5px;color:#44ee44;letter-spacing:-0.35px;clip-path:inset(0 0 0px 0)">Ask Trade</div>
<div class="a" style="left:1059px;top:449px;width:293px;height:1px;background:#3c3c3c;"></div>
<div class="a t" style="left:1062.5px;top:432px;line-height:17px;font-size:11.5px;color:#44ee44;letter-spacing:-0.35px;clip-path:inset(0 0 0px 0)">00:02:11</div>
<div class="a t" style="left:1135px;top:432px;line-height:17px;font-size:11.5px;color:#44ee44;letter-spacing:-0.35px;clip-path:inset(0 0 0px 0)">4289.25</div>
<div class="a t" style="left:1205.5px;top:432px;line-height:17px;font-size:11.5px;color:#44ee44;letter-spacing:-0.35px;clip-path:inset(0 0 0px 0)">5</div>
<div class="a t" style="left:1265px;top:432px;line-height:17px;font-size:11.5px;color:#44ee44;letter-spacing:-0.35px;clip-path:inset(0 0 0px 0)">Ask Trade</div>
<div class="a" style="left:1059px;top:468px;width:293px;height:1px;background:#3c3c3c;"></div>
<div class="a t" style="left:1062.5px;top:451px;line-height:17px;font-size:11.5px;color:#44ee44;letter-spacing:-0.35px;clip-path:inset(0 0 0px 0)">00:02:10</div>
<div class="a t" style="left:1135px;top:451px;line-height:17px;font-size:11.5px;color:#44ee44;letter-spacing:-0.35px;clip-path:inset(0 0 0px 0)">4289.00</div>
<div class="a t" style="left:1205.5px;top:451px;line-height:17px;font-size:11.5px;color:#44ee44;letter-spacing:-0.35px;clip-path:inset(0 0 0px 0)">5</div>
<div class="a t" style="left:1265px;top:451px;line-height:17px;font-size:11.5px;color:#44ee44;letter-spacing:-0.35px;clip-path:inset(0 0 0px 0)">Ask Trade</div>
<div class="a" style="left:1059px;top:487px;width:293px;height:1px;background:#3c3c3c;"></div>
<div class="a t" style="left:1062.5px;top:470px;line-height:17px;font-size:11.5px;color:#ff8066;letter-spacing:-0.35px;clip-path:inset(0 0 0px 0)">00:02:10</div>
<div class="a t" style="left:1135px;top:470px;line-height:17px;font-size:11.5px;color:#ff8066;letter-spacing:-0.35px;clip-path:inset(0 0 0px 0)">4289.00</div>
<div class="a t" style="left:1205.5px;top:470px;line-height:17px;font-size:11.5px;color:#ff8066;letter-spacing:-0.35px;clip-path:inset(0 0 0px 0)">6</div>
<div class="a t" style="left:1265px;top:470px;line-height:17px;font-size:11.5px;color:#ff8066;letter-spacing:-0.35px;clip-path:inset(0 0 0px 0)">Bid Trade</div>
<div class="a" style="left:1059px;top:506px;width:293px;height:1px;background:#3c3c3c;"></div>
<div class="a t" style="left:1062.5px;top:489px;line-height:17px;font-size:11.5px;color:#ff8066;letter-spacing:-0.35px;clip-path:inset(0 0 0px 0)">00:02:10</div>
<div class="a t" style="left:1135px;top:489px;line-height:17px;font-size:11.5px;color:#ff8066;letter-spacing:-0.35px;clip-path:inset(0 0 0px 0)">4289.00</div>
<div class="a t" style="left:1205.5px;top:489px;line-height:17px;font-size:11.5px;color:#ff8066;letter-spacing:-0.35px;clip-path:inset(0 0 0px 0)">6</div>
<div class="a t" style="left:1265px;top:489px;line-height:17px;font-size:11.5px;color:#ff8066;letter-spacing:-0.35px;clip-path:inset(0 0 0px 0)">Bid Trade</div>
<div class="a" style="left:1059px;top:525px;width:293px;height:1px;background:#3c3c3c;"></div>
<div class="a t" style="left:1062.5px;top:508px;line-height:17px;font-size:11.5px;color:#ff8066;letter-spacing:-0.35px;clip-path:inset(0 0 0px 0)">00:02:08</div>
<div class="a t" style="left:1135px;top:508px;line-height:17px;font-size:11.5px;color:#ff8066;letter-spacing:-0.35px;clip-path:inset(0 0 0px 0)">4289.00</div>
<div class="a t" style="left:1205.5px;top:508px;line-height:17px;font-size:11.5px;color:#ff8066;letter-spacing:-0.35px;clip-path:inset(0 0 0px 0)">5</div>
<div class="a t" style="left:1265px;top:508px;line-height:17px;font-size:11.5px;color:#ff8066;letter-spacing:-0.35px;clip-path:inset(0 0 0px 0)">Bid Trade</div>
<div class="a" style="left:1059px;top:544px;width:293px;height:1px;background:#3c3c3c;"></div>
<div class="a t" style="left:1062.5px;top:527px;line-height:17px;font-size:11.5px;color:#ff8066;letter-spacing:-0.35px;clip-path:inset(0 0 0px 0)">00:02:08</div>
<div class="a t" style="left:1135px;top:527px;line-height:17px;font-size:11.5px;color:#ff8066;letter-spacing:-0.35px;clip-path:inset(0 0 0px 0)">4289.25</div>
<div class="a t" style="left:1205.5px;top:527px;line-height:17px;font-size:11.5px;color:#ff8066;letter-spacing:-0.35px;clip-path:inset(0 0 0px 0)">10</div>
<div class="a t" style="left:1265px;top:527px;line-height:17px;font-size:11.5px;color:#ff8066;letter-spacing:-0.35px;clip-path:inset(0 0 0px 0)">Bid Trade</div>
<div class="a" style="left:1059px;top:563px;width:293px;height:1px;background:#3c3c3c;"></div>
<div class="a t" style="left:1062.5px;top:546px;line-height:17px;font-size:11.5px;color:#ff8066;letter-spacing:-0.35px;clip-path:inset(0 0 0px 0)">00:02:08</div>
<div class="a t" style="left:1135px;top:546px;line-height:17px;font-size:11.5px;color:#ff8066;letter-spacing:-0.35px;clip-path:inset(0 0 0px 0)">4289.50</div>
<div class="a t" style="left:1205.5px;top:546px;line-height:17px;font-size:11.5px;color:#ff8066;letter-spacing:-0.35px;clip-path:inset(0 0 0px 0)">5</div>
<div class="a t" style="left:1265px;top:546px;line-height:17px;font-size:11.5px;color:#ff8066;letter-spacing:-0.35px;clip-path:inset(0 0 0px 0)">Bid Trade</div>
<div class="a" style="left:1059px;top:582px;width:293px;height:1px;background:#3c3c3c;"></div>
<div class="a t" style="left:1062.5px;top:565px;line-height:17px;font-size:11.5px;color:#ff8066;letter-spacing:-0.35px;clip-path:inset(0 0 0px 0)">00:02:08</div>
<div class="a t" style="left:1135px;top:565px;line-height:17px;font-size:11.5px;color:#ff8066;letter-spacing:-0.35px;clip-path:inset(0 0 0px 0)">4289.75</div>
<div class="a t" style="left:1205.5px;top:565px;line-height:17px;font-size:11.5px;color:#ff8066;letter-spacing:-0.35px;clip-path:inset(0 0 0px 0)">6</div>
<div class="a t" style="left:1265px;top:565px;line-height:17px;font-size:11.5px;color:#ff8066;letter-spacing:-0.35px;clip-path:inset(0 0 0px 0)">Bid Trade</div>
<div class="a" style="left:1059px;top:601px;width:293px;height:1px;background:#3c3c3c;"></div>
<div class="a t" style="left:1062.5px;top:584px;line-height:17px;font-size:11.5px;color:#ff8066;letter-spacing:-0.35px;clip-path:inset(0 0 0px 0)">00:02:05</div>
<div class="a t" style="left:1135px;top:584px;line-height:17px;font-size:11.5px;color:#ff8066;letter-spacing:-0.35px;clip-path:inset(0 0 0px 0)">4290.25</div>
<div class="a t" style="left:1205.5px;top:584px;line-height:17px;font-size:11.5px;color:#ff8066;letter-spacing:-0.35px;clip-path:inset(0 0 0px 0)">5</div>
<div class="a t" style="left:1265px;top:584px;line-height:17px;font-size:11.5px;color:#ff8066;letter-spacing:-0.35px;clip-path:inset(0 0 0px 0)">Bid Trade</div>
<div class="a" style="left:1059px;top:620px;width:293px;height:1px;background:#3c3c3c;"></div>
<div class="a t" style="left:1062.5px;top:603px;line-height:17px;font-size:11.5px;color:#44ee44;letter-spacing:-0.35px;clip-path:inset(0 0 0px 0)">00:02:04</div>
<div class="a t" style="left:1135px;top:603px;line-height:17px;font-size:11.5px;color:#44ee44;letter-spacing:-0.35px;clip-path:inset(0 0 0px 0)">4290.50</div>
<div class="a t" style="left:1205.5px;top:603px;line-height:17px;font-size:11.5px;color:#44ee44;letter-spacing:-0.35px;clip-path:inset(0 0 0px 0)">5</div>
<div class="a t" style="left:1265px;top:603px;line-height:17px;font-size:11.5px;color:#44ee44;letter-spacing:-0.35px;clip-path:inset(0 0 0px 0)">Ask Trade</div>
<div class="a" style="left:1059px;top:639px;width:293px;height:1px;background:#3c3c3c;"></div>
<div class="a t" style="left:1062.5px;top:622px;line-height:17px;font-size:11.5px;color:#ff8066;letter-spacing:-0.35px;clip-path:inset(0 0 0px 0)">00:02:01</div>
<div class="a t" style="left:1135px;top:622px;line-height:17px;font-size:11.5px;color:#ff8066;letter-spacing:-0.35px;clip-path:inset(0 0 0px 0)">4291.00</div>
<div class="a t" style="left:1205.5px;top:622px;line-height:17px;font-size:11.5px;color:#ff8066;letter-spacing:-0.35px;clip-path:inset(0 0 0px 0)">5</div>
<div class="a t" style="left:1265px;top:622px;line-height:17px;font-size:11.5px;color:#ff8066;letter-spacing:-0.35px;clip-path:inset(0 0 0px 0)">Bid Trade</div>
<div class="a" style="left:1059px;top:658px;width:293px;height:1px;background:#3c3c3c;"></div>
<div class="a t" style="left:1062.5px;top:641px;line-height:17px;font-size:11.5px;color:#ff8066;letter-spacing:-0.35px;clip-path:inset(0 0 0px 0)">00:02:01</div>
<div class="a t" style="left:1135px;top:641px;line-height:17px;font-size:11.5px;color:#ff8066;letter-spacing:-0.35px;clip-path:inset(0 0 0px 0)">4291.00</div>
<div class="a t" style="left:1205.5px;top:641px;line-height:17px;font-size:11.5px;color:#ff8066;letter-spacing:-0.35px;clip-path:inset(0 0 0px 0)">10</div>
<div class="a t" style="left:1265px;top:641px;line-height:17px;font-size:11.5px;color:#ff8066;letter-spacing:-0.35px;clip-path:inset(0 0 0px 0)">Bid Trade</div>
<div class="a" style="left:1059px;top:677px;width:293px;height:1px;background:#3c3c3c;"></div>
<div class="a t" style="left:1062.5px;top:660px;line-height:17px;font-size:11.5px;color:#44ee44;letter-spacing:-0.35px;clip-path:inset(0 0 0px 0)">00:02:00</div>
<div class="a t" style="left:1135px;top:660px;line-height:17px;font-size:11.5px;color:#44ee44;letter-spacing:-0.35px;clip-path:inset(0 0 0px 0)">4290.75</div>
<div class="a t" style="left:1205.5px;top:660px;line-height:17px;font-size:11.5px;color:#44ee44;letter-spacing:-0.35px;clip-path:inset(0 0 0px 0)">6</div>
<div class="a t" style="left:1265px;top:660px;line-height:17px;font-size:11.5px;color:#44ee44;letter-spacing:-0.35px;clip-path:inset(0 0 0px 0)">Ask Trade</div>
<div class="a" style="left:1059px;top:696px;width:293px;height:1px;background:#3c3c3c;"></div>
<div class="a t" style="left:1062.5px;top:679px;line-height:17px;font-size:11.5px;color:#44ee44;letter-spacing:-0.35px;clip-path:inset(0 0 0px 0)">00:01:58</div>
<div class="a t" style="left:1135px;top:679px;line-height:17px;font-size:11.5px;color:#44ee44;letter-spacing:-0.35px;clip-path:inset(0 0 0px 0)">4290.25</div>
<div class="a t" style="left:1205.5px;top:679px;line-height:17px;font-size:11.5px;color:#44ee44;letter-spacing:-0.35px;clip-path:inset(0 0 0px 0)">8</div>
<div class="a t" style="left:1265px;top:679px;line-height:17px;font-size:11.5px;color:#44ee44;letter-spacing:-0.35px;clip-path:inset(0 0 0px 0)">Ask Trade</div>
<div class="a" style="left:1059px;top:715px;width:293px;height:1px;background:#3c3c3c;"></div>
<div class="a t" style="left:1062.5px;top:698px;line-height:17px;font-size:11.5px;color:#ff8066;letter-spacing:-0.35px;clip-path:inset(0 0 0px 0)">00:01:57</div>
<div class="a t" style="left:1135px;top:698px;line-height:17px;font-size:11.5px;color:#ff8066;letter-spacing:-0.35px;clip-path:inset(0 0 0px 0)">4290.25</div>
<div class="a t" style="left:1205.5px;top:698px;line-height:17px;font-size:11.5px;color:#ff8066;letter-spacing:-0.35px;clip-path:inset(0 0 0px 0)">5</div>
<div class="a t" style="left:1265px;top:698px;line-height:17px;font-size:11.5px;color:#ff8066;letter-spacing:-0.35px;clip-path:inset(0 0 0px 0)">Bid Trade</div>
<div class="a" style="left:1059px;top:734px;width:293px;height:1px;background:#3c3c3c;"></div>
<div class="a t" style="left:1062.5px;top:717px;line-height:17px;font-size:11.5px;color:#44ee44;letter-spacing:-0.35px;clip-path:inset(0 0 0px 0)">00:01:55</div>
<div class="a t" style="left:1135px;top:717px;line-height:17px;font-size:11.5px;color:#44ee44;letter-spacing:-0.35px;clip-path:inset(0 0 0px 0)">4290.25</div>
<div class="a t" style="left:1205.5px;top:717px;line-height:17px;font-size:11.5px;color:#44ee44;letter-spacing:-0.35px;clip-path:inset(0 0 0px 0)">7</div>
<div class="a t" style="left:1265px;top:717px;line-height:17px;font-size:11.5px;color:#44ee44;letter-spacing:-0.35px;clip-path:inset(0 0 0px 0)">Ask Trade</div>
<div class="a" style="left:1059px;top:753px;width:293px;height:1px;background:#3c3c3c;"></div>
<div class="a t" style="left:1062.5px;top:736px;line-height:17px;font-size:11.5px;color:#44ee44;letter-spacing:-0.35px;clip-path:inset(0 0 0px 0)">00:01:52</div>
<div class="a t" style="left:1135px;top:736px;line-height:17px;font-size:11.5px;color:#44ee44;letter-spacing:-0.35px;clip-path:inset(0 0 0px 0)">4290.25</div>
<div class="a t" style="left:1205.5px;top:736px;line-height:17px;font-size:11.5px;color:#44ee44;letter-spacing:-0.35px;clip-path:inset(0 0 0px 0)">7</div>
<div class="a t" style="left:1265px;top:736px;line-height:17px;font-size:11.5px;color:#44ee44;letter-spacing:-0.35px;clip-path:inset(0 0 0px 0)">Ask Trade</div>
<div class="a" style="left:1059px;top:772px;width:293px;height:1px;background:#3c3c3c;"></div>
<div class="a t" style="left:1062.5px;top:755px;line-height:17px;font-size:11.5px;color:#44ee44;letter-spacing:-0.35px;clip-path:inset(0 0 0px 0)">00:01:50</div>
<div class="a t" style="left:1135px;top:755px;line-height:17px;font-size:11.5px;color:#44ee44;letter-spacing:-0.35px;clip-path:inset(0 0 0px 0)">4290.25</div>
<div class="a t" style="left:1205.5px;top:755px;line-height:17px;font-size:11.5px;color:#44ee44;letter-spacing:-0.35px;clip-path:inset(0 0 0px 0)">7</div>
<div class="a t" style="left:1265px;top:755px;line-height:17px;font-size:11.5px;color:#44ee44;letter-spacing:-0.35px;clip-path:inset(0 0 0px 0)">Ask Trade</div>
<div class="a" style="left:1059px;top:773px;width:293px;height:19px;background:#ff80c0;"></div>
<div class="a" style="left:1059px;top:791px;width:293px;height:1px;background:#3c3c3c;"></div>
<div class="a t" style="left:1062.5px;top:774px;line-height:17px;font-size:11.5px;color:#1a0010;letter-spacing:-0.35px;clip-path:inset(0 0 0px 0)">00:01:50</div>
<div class="a t" style="left:1135px;top:774px;line-height:17px;font-size:11.5px;color:#1a0010;letter-spacing:-0.35px;clip-path:inset(0 0 0px 0)">4289.75</div>
<div class="a t" style="left:1205.5px;top:774px;line-height:17px;font-size:11.5px;color:#1a0010;letter-spacing:-0.35px;clip-path:inset(0 0 0px 0)">20</div>
<div class="a t" style="left:1265px;top:774px;line-height:17px;font-size:11.5px;color:#1a0010;letter-spacing:-0.35px;clip-path:inset(0 0 0px 0)">Bid Trade</div>
<div class="a" style="left:1059px;top:792px;width:293px;height:19px;background:#ff80c0;"></div>
<div class="a" style="left:1059px;top:810px;width:293px;height:1px;background:#3c3c3c;"></div>
<div class="a t" style="left:1062.5px;top:793px;line-height:17px;font-size:11.5px;color:#1a0010;letter-spacing:-0.35px;clip-path:inset(0 0 0px 0)">00:01:50</div>
<div class="a t" style="left:1135px;top:793px;line-height:17px;font-size:11.5px;color:#1a0010;letter-spacing:-0.35px;clip-path:inset(0 0 0px 0)">4290.00</div>
<div class="a t" style="left:1205.5px;top:793px;line-height:17px;font-size:11.5px;color:#1a0010;letter-spacing:-0.35px;clip-path:inset(0 0 0px 0)">26</div>
<div class="a t" style="left:1265px;top:793px;line-height:17px;font-size:11.5px;color:#1a0010;letter-spacing:-0.35px;clip-path:inset(0 0 0px 0)">Bid Trade</div>
<div class="a" style="left:1059px;top:811px;width:293px;height:19px;background:#ff80c0;"></div>
<div class="a" style="left:1059px;top:829px;width:293px;height:1px;background:#3c3c3c;"></div>
<div class="a t" style="left:1062.5px;top:812px;line-height:17px;font-size:11.5px;color:#1a0010;letter-spacing:-0.35px;clip-path:inset(0 0 0px 0)">00:01:50</div>
<div class="a t" style="left:1135px;top:812px;line-height:17px;font-size:11.5px;color:#1a0010;letter-spacing:-0.35px;clip-path:inset(0 0 0px 0)">4290.25</div>
<div class="a t" style="left:1205.5px;top:812px;line-height:17px;font-size:11.5px;color:#1a0010;letter-spacing:-0.35px;clip-path:inset(0 0 0px 0)">19</div>
<div class="a t" style="left:1265px;top:812px;line-height:17px;font-size:11.5px;color:#1a0010;letter-spacing:-0.35px;clip-path:inset(0 0 0px 0)">Bid Trade</div>
<div class="a" style="left:1059px;top:848px;width:293px;height:1px;background:#3c3c3c;"></div>
<div class="a t" style="left:1062.5px;top:831px;line-height:17px;font-size:11.5px;color:#ff8066;letter-spacing:-0.35px;clip-path:inset(0 0 0px 0)">00:01:50</div>
<div class="a t" style="left:1135px;top:831px;line-height:17px;font-size:11.5px;color:#ff8066;letter-spacing:-0.35px;clip-path:inset(0 0 0px 0)">4290.50</div>
<div class="a t" style="left:1205.5px;top:831px;line-height:17px;font-size:11.5px;color:#ff8066;letter-spacing:-0.35px;clip-path:inset(0 0 0px 0)">15</div>
<div class="a t" style="left:1265px;top:831px;line-height:17px;font-size:11.5px;color:#ff8066;letter-spacing:-0.35px;clip-path:inset(0 0 0px 0)">Bid Trade</div>
<div class="a" style="left:1059px;top:867px;width:293px;height:1px;background:#3c3c3c;"></div>
<div class="a t" style="left:1062.5px;top:850px;line-height:17px;font-size:11.5px;color:#44ee44;letter-spacing:-0.35px;clip-path:inset(0 0 0px 0)">00:01:49</div>
<div class="a t" style="left:1135px;top:850px;line-height:17px;font-size:11.5px;color:#44ee44;letter-spacing:-0.35px;clip-path:inset(0 0 0px 0)">4290.75</div>
<div class="a t" style="left:1205.5px;top:850px;line-height:17px;font-size:11.5px;color:#44ee44;letter-spacing:-0.35px;clip-path:inset(0 0 0px 0)">6</div>
<div class="a t" style="left:1265px;top:850px;line-height:17px;font-size:11.5px;color:#44ee44;letter-spacing:-0.35px;clip-path:inset(0 0 0px 0)">Ask Trade</div>
<div class="a" style="left:1059px;top:886px;width:293px;height:1px;background:#3c3c3c;"></div>
<div class="a t" style="left:1062.5px;top:869px;line-height:17px;font-size:11.5px;color:#44ee44;letter-spacing:-0.35px;clip-path:inset(0 0 0px 0)">00:01:48</div>
<div class="a t" style="left:1135px;top:869px;line-height:17px;font-size:11.5px;color:#44ee44;letter-spacing:-0.35px;clip-path:inset(0 0 0px 0)">4290.25</div>
<div class="a t" style="left:1205.5px;top:869px;line-height:17px;font-size:11.5px;color:#44ee44;letter-spacing:-0.35px;clip-path:inset(0 0 0px 0)">10</div>
<div class="a t" style="left:1265px;top:869px;line-height:17px;font-size:11.5px;color:#44ee44;letter-spacing:-0.35px;clip-path:inset(0 0 0px 0)">Ask Trade</div>
<div class="a" style="left:1059px;top:905px;width:293px;height:1px;background:#3c3c3c;"></div>
<div class="a t" style="left:1062.5px;top:888px;line-height:17px;font-size:11.5px;color:#44ee44;letter-spacing:-0.35px;clip-path:inset(0 0 0px 0)">00:01:47</div>
<div class="a t" style="left:1135px;top:888px;line-height:17px;font-size:11.5px;color:#44ee44;letter-spacing:-0.35px;clip-path:inset(0 0 0px 0)">4290.00</div>
<div class="a t" style="left:1205.5px;top:888px;line-height:17px;font-size:11.5px;color:#44ee44;letter-spacing:-0.35px;clip-path:inset(0 0 0px 0)">6</div>
<div class="a t" style="left:1265px;top:888px;line-height:17px;font-size:11.5px;color:#44ee44;letter-spacing:-0.35px;clip-path:inset(0 0 0px 0)">Ask Trade</div>
<div class="a" style="left:1059px;top:924px;width:293px;height:1px;background:#3c3c3c;"></div>
<div class="a t" style="left:1062.5px;top:907px;line-height:17px;font-size:11.5px;color:#ff8066;letter-spacing:-0.35px;clip-path:inset(0 0 0px 0)">00:01:46</div>
<div class="a t" style="left:1135px;top:907px;line-height:17px;font-size:11.5px;color:#ff8066;letter-spacing:-0.35px;clip-path:inset(0 0 0px 0)">4290.00</div>
<div class="a t" style="left:1205.5px;top:907px;line-height:17px;font-size:11.5px;color:#ff8066;letter-spacing:-0.35px;clip-path:inset(0 0 0px 0)">7</div>
<div class="a t" style="left:1265px;top:907px;line-height:17px;font-size:11.5px;color:#ff8066;letter-spacing:-0.35px;clip-path:inset(0 0 0px 0)">Bid Trade</div>
<div class="a" style="left:1059px;top:925px;width:293px;height:19px;background:#ff80c0;"></div>
<div class="a" style="left:1059px;top:943px;width:293px;height:1px;background:#3c3c3c;"></div>
<div class="a t" style="left:1062.5px;top:926px;line-height:17px;font-size:11.5px;color:#1a0010;letter-spacing:-0.35px;clip-path:inset(0 0 0px 0)">00:01:44</div>
<div class="a t" style="left:1135px;top:926px;line-height:17px;font-size:11.5px;color:#1a0010;letter-spacing:-0.35px;clip-path:inset(0 0 0px 0)">4290.25</div>
<div class="a t" style="left:1205.5px;top:926px;line-height:17px;font-size:11.5px;color:#1a0010;letter-spacing:-0.35px;clip-path:inset(0 0 0px 0)">8</div>
<div class="a t" style="left:1265px;top:926px;line-height:17px;font-size:11.5px;color:#1a0010;letter-spacing:-0.35px;clip-path:inset(0 0 0px 0)">Bid Trade</div>
<div class="a" style="left:1059px;top:962px;width:293px;height:1px;background:#3c3c3c;"></div>
<div class="a t" style="left:1062.5px;top:945px;line-height:17px;font-size:11.5px;color:#ff8066;letter-spacing:-0.35px;clip-path:inset(0 0 0px 0)">00:01:43</div>
<div class="a t" style="left:1135px;top:945px;line-height:17px;font-size:11.5px;color:#ff8066;letter-spacing:-0.35px;clip-path:inset(0 0 0px 0)">4290.75</div>
<div class="a t" style="left:1205.5px;top:945px;line-height:17px;font-size:11.5px;color:#ff8066;letter-spacing:-0.35px;clip-path:inset(0 0 0px 0)">10</div>
<div class="a t" style="left:1265px;top:945px;line-height:17px;font-size:11.5px;color:#ff8066;letter-spacing:-0.35px;clip-path:inset(0 0 0px 0)">Bid Trade</div>
<div class="a" style="left:1059px;top:981px;width:293px;height:1px;background:#3c3c3c;"></div>
<div class="a t" style="left:1062.5px;top:964px;line-height:17px;font-size:11.5px;color:#ff8066;letter-spacing:-0.35px;clip-path:inset(0 0 0px 0)">00:01:37</div>
<div class="a t" style="left:1135px;top:964px;line-height:17px;font-size:11.5px;color:#ff8066;letter-spacing:-0.35px;clip-path:inset(0 0 0px 0)">4291.75</div>
<div class="a t" style="left:1205.5px;top:964px;line-height:17px;font-size:11.5px;color:#ff8066;letter-spacing:-0.35px;clip-path:inset(0 0 0px 0)">6</div>
<div class="a t" style="left:1265px;top:964px;line-height:17px;font-size:11.5px;color:#ff8066;letter-spacing:-0.35px;clip-path:inset(0 0 0px 0)">Bid Trade</div>
<div class="a" style="left:1059px;top:1000px;width:293px;height:1px;background:#3c3c3c;"></div>
<div class="a t" style="left:1062.5px;top:983px;line-height:17px;font-size:11.5px;color:#ff8066;letter-spacing:-0.35px;clip-path:inset(0 0 0px 0)">00:01:35</div>
<div class="a t" style="left:1135px;top:983px;line-height:17px;font-size:11.5px;color:#ff8066;letter-spacing:-0.35px;clip-path:inset(0 0 0px 0)">4291.50</div>
<div class="a t" style="left:1205.5px;top:983px;line-height:17px;font-size:11.5px;color:#ff8066;letter-spacing:-0.35px;clip-path:inset(0 0 0px 0)">5</div>
<div class="a t" style="left:1265px;top:983px;line-height:17px;font-size:11.5px;color:#ff8066;letter-spacing:-0.35px;clip-path:inset(0 0 0px 0)">Bid Trade</div>
<div class="a" style="left:1133px;top:184px;width:1px;height:828px;background:#3c3c3c;"></div>
<div class="a" style="left:1204px;top:184px;width:1px;height:828px;background:#3c3c3c;"></div>
<div class="a" style="left:1263px;top:184px;width:1px;height:828px;background:#3c3c3c;"></div>
<div class="a" style="left:1339px;top:184px;width:1px;height:828px;background:#3c3c3c;"></div>
<div class="a" style="left:1352px;top:158px;width:17px;height:854px;background:#f0f0f0;"></div>
<svg class="a" style="left:1352px;top:162px" width="17" height="14"><path d="M4.5 9 L8.5 5 L12.5 9" fill="none" stroke="#555" stroke-width="1.6"/></svg>
<div class="a" style="left:1354px;top:176px;width:14px;height:17px;background:#cdcdcd;"></div>
<svg class="a" style="left:1352px;top:997px" width="17" height="14"><path d="M4.5 5 L8.5 9 L12.5 5" fill="none" stroke="#555" stroke-width="1.6"/></svg>
<div class="a" style="left:1412px;top:65px;width:261px;height:30px;background:#fff;border:1px solid #a6a6a6;box-shadow:1px 1px 2px rgba(0,0,0,0.2)"></div>
<svg class="a" style="left:1421px;top:74px" width="16" height="14" viewBox="0 0 16 14"><rect x="0.5" y="0.5" width="14" height="12" rx="1" fill="#fafafa" stroke="#a4a8b0"/><rect x="1" y="1" width="13" height="1" fill="#c8ccd4"/><rect x="2" y="2.5" width="5" height="8" fill="url(#icg)"/><rect x="8.5" y="2.5" width="2.5" height="8" fill="#e2e2e2"/><rect x="12" y="2.5" width="2" height="4" fill="url(#icg2)"/></svg>
<div class="a t " style="left:1442px;top:74.0px;line-height:14px;font-size:12px;color:#9a9a9a;;letter-spacing:-0.401px">Trade Service Log</div>
<svg class="a" style="left:1550px;top:72px" width="110" height="18"><line x1="5" y1="8.5" x2="15" y2="8.5" stroke="#777"/><rect x="50.5" y="3.5" width="10" height="10" fill="none" stroke="#777"/><path d="M96 3.5 L106 13.5 M106 3.5 L96 13.5" stroke="#777" stroke-width="1.1"/></svg>
<div class="a" style="left:1678px;top:65px;width:243px;height:30px;background:#fff;border:1px solid #a6a6a6;box-shadow:1px 1px 2px rgba(0,0,0,0.2)"></div>
<svg class="a" style="left:1687px;top:74px" width="16" height="14" viewBox="0 0 16 14"><rect x="0.5" y="0.5" width="14" height="12" rx="1" fill="#fafafa" stroke="#a4a8b0"/><rect x="1" y="1" width="13" height="1" fill="#c8ccd4"/><rect x="2" y="2.5" width="5" height="8" fill="url(#icg)"/><rect x="8.5" y="2.5" width="2.5" height="8" fill="#e2e2e2"/><rect x="12" y="2.5" width="2" height="4" fill="url(#icg2)"/></svg>
<div class="a t " style="left:1708px;top:74.0px;line-height:14px;font-size:12px;color:#9a9a9a;;letter-spacing:-0.332px">Message Log</div>
<svg class="a" style="left:1798px;top:72px" width="110" height="18"><line x1="5" y1="8.5" x2="15" y2="8.5" stroke="#777"/><rect x="50.5" y="3.5" width="10" height="10" fill="none" stroke="#777"/><path d="M96 3.5 L106 13.5 M106 3.5 L96 13.5" stroke="#777" stroke-width="1.1"/></svg>
<div class="a" style="left:815px;top:266px;width:795px;height:585px;background:#f0f0f0;border:1px solid #8c8c8c;box-shadow:2px 3px 8px rgba(0,0,0,0.35)"></div>
<div class="a" style="left:816px;top:267px;width:795px;height:29px;background:#fff;"></div>
<div class="a t " style="left:823px;top:274.0px;line-height:14px;font-size:12px;color:#000;;letter-spacing:-0.305px">Time and Sales Settings</div>
<svg class="a" style="left:1585px;top:270px" width="22" height="20"><path d="M6 5 L16 15 M16 5 L6 15" stroke="#222" stroke-width="1.1"/></svg>
<div class="a" style="left:829px;top:318px;width:317px;height:51px;border:1px solid #a0a0a0;box-shadow:inset 1px 1px 0 #fff,1px 1px 0 #fff"></div>
<div class="a" style="left:835px;top:311px;width:111px;height:14px;background:#f0f0f0;"></div>
<div class="a t " style="left:838px;top:310.6px;line-height:16px;font-size:13.5px;color:#000;">Combine Records</div>
<div class="a" style="left:837px;top:334px;width:295px;height:21px;background:#fff;border:1px solid;border-color:#a0a0a0 #fff #fff #a0a0a0;box-shadow:inset 1px 1px 0 #696969,inset -1px -1px 0 #e3e3e3"></div>
<div class="a" style="left:1115px;top:336px;width:15px;height:17px;background:#f0f0f0;border:1px solid;border-color:#fff #696969 #696969 #fff;box-shadow:inset -1px -1px 0 #a0a0a0"></div>
<svg class="a" style="left:1119.0px;top:341.5px" width="10" height="8"><path d="M1.5 2 L8.5 2 L5 6Z" fill="#000"/></svg>
<div class="a" style="left:840px;top:337px;width:274px;height:17px;background:#0078d7;"></div>
<div class="a t" style="left:841px;top:337px;width:273px;height:17px;overflow:hidden;line-height:17px;font-size:13.5px;color:#fff;white-space:pre">Combine into Exchange Reported Original Summary</div>
<div class="a" style="left:829px;top:426px;width:11px;height:11px;background:#fff;border:1px solid;border-color:#6d6d6d #e8e8e8 #e8e8e8 #6d6d6d;box-shadow:inset 1px 1px 0 #a8a8a8"></div>
<div class="a t " style="left:847px;top:425.6px;line-height:16px;font-size:13.5px;color:#000;">Show Bid And Ask Records</div>
<div class="a" style="left:829px;top:446px;width:11px;height:11px;background:#fff;border:1px solid;border-color:#6d6d6d #e8e8e8 #e8e8e8 #6d6d6d;box-shadow:inset 1px 1px 0 #a8a8a8"></div>
<svg class="a" style="left:829px;top:446px" width="13" height="13"><path d="M3 6.5 L5.3 9 L10 3.5" fill="none" stroke="#000" stroke-width="1.8"/></svg>
<div class="a t " style="left:847px;top:445.6px;line-height:16px;font-size:13.5px;color:#000;">Show Gridlines</div>
<div class="a" style="left:829px;top:466px;width:11px;height:11px;background:#fff;border:1px solid;border-color:#6d6d6d #e8e8e8 #e8e8e8 #6d6d6d;box-shadow:inset 1px 1px 0 #a8a8a8"></div>
<svg class="a" style="left:829px;top:466px" width="13" height="13"><path d="M3 6.5 L5.3 9 L10 3.5" fill="none" stroke="#000" stroke-width="1.8"/></svg>
<div class="a t " style="left:847px;top:465.6px;line-height:16px;font-size:13.5px;color:#000;">Show Title Bar</div>
<div class="a" style="left:829px;top:486px;width:11px;height:11px;background:#fff;border:1px solid;border-color:#6d6d6d #e8e8e8 #e8e8e8 #6d6d6d;box-shadow:inset 1px 1px 0 #a8a8a8"></div>
<div class="a t " style="left:847px;top:485.6px;line-height:16px;font-size:13.5px;color:#000;">Include Milliseconds and Microseconds in Time</div>
<div class="a" style="left:1155px;top:318px;width:109px;height:233px;border:1px solid #a0a0a0;box-shadow:inset 1px 1px 0 #fff,1px 1px 0 #fff"></div>
<div class="a" style="left:1161px;top:311px;width:61px;height:14px;background:#f0f0f0;"></div>
<div class="a t " style="left:1164px;top:310.6px;line-height:16px;font-size:13.5px;color:#000;">Columns:</div>
<div class="a" style="left:1167px;top:332px;width:11px;height:11px;background:#fff;border:1px solid;border-color:#6d6d6d #e8e8e8 #e8e8e8 #6d6d6d;box-shadow:inset 1px 1px 0 #a8a8a8"></div>
<div class="a t " style="left:1185px;top:331.6px;line-height:16px;font-size:13.5px;color:#000;">Date</div>
<div class="a" style="left:1167px;top:352px;width:11px;height:11px;background:#fff;border:1px solid;border-color:#6d6d6d #e8e8e8 #e8e8e8 #6d6d6d;box-shadow:inset 1px 1px 0 #a8a8a8"></div>
<svg class="a" style="left:1167px;top:352px" width="13" height="13"><path d="M3 6.5 L5.3 9 L10 3.5" fill="none" stroke="#000" stroke-width="1.8"/></svg>
<div class="a t " style="left:1185px;top:351.6px;line-height:16px;font-size:13.5px;color:#000;">Time</div>
<div class="a" style="left:1167px;top:374px;width:11px;height:11px;background:#fff;border:1px solid;border-color:#6d6d6d #e8e8e8 #e8e8e8 #6d6d6d;box-shadow:inset 1px 1px 0 #a8a8a8"></div>
<svg class="a" style="left:1167px;top:374px" width="13" height="13"><path d="M3 6.5 L5.3 9 L10 3.5" fill="none" stroke="#000" stroke-width="1.8"/></svg>
<div class="a t " style="left:1185px;top:373.6px;line-height:16px;font-size:13.5px;color:#000;">Price</div>
<div class="a" style="left:1167px;top:396px;width:11px;height:11px;background:#fff;border:1px solid;border-color:#6d6d6d #e8e8e8 #e8e8e8 #6d6d6d;box-shadow:inset 1px 1px 0 #a8a8a8"></div>
<svg class="a" style="left:1167px;top:396px" width="13" height="13"><path d="M3 6.5 L5.3 9 L10 3.5" fill="none" stroke="#000" stroke-width="1.8"/></svg>
<div class="a t " style="left:1185px;top:395.6px;line-height:16px;font-size:13.5px;color:#000;">Volume</div>
<div class="a" style="left:1167px;top:420px;width:11px;height:11px;background:#fff;border:1px solid;border-color:#6d6d6d #e8e8e8 #e8e8e8 #6d6d6d;box-shadow:inset 1px 1px 0 #a8a8a8"></div>
<div class="a t " style="left:1185px;top:419.6px;line-height:16px;font-size:13.5px;color:#000;">NumTrades</div>
<div class="a" style="left:1167px;top:442px;width:11px;height:11px;background:#fff;border:1px solid;border-color:#6d6d6d #e8e8e8 #e8e8e8 #6d6d6d;box-shadow:inset 1px 1px 0 #a8a8a8"></div>
<svg class="a" style="left:1167px;top:442px" width="13" height="13"><path d="M3 6.5 L5.3 9 L10 3.5" fill="none" stroke="#000" stroke-width="1.8"/></svg>
<div class="a t " style="left:1185px;top:441.6px;line-height:16px;font-size:13.5px;color:#000;">Type</div>
<div class="a" style="left:1167px;top:466px;width:11px;height:11px;background:#fff;border:1px solid;border-color:#6d6d6d #e8e8e8 #e8e8e8 #6d6d6d;box-shadow:inset 1px 1px 0 #a8a8a8"></div>
<div class="a t " style="left:1185px;top:465.6px;line-height:16px;font-size:13.5px;color:#000;">Bid</div>
<div class="a" style="left:1167px;top:488px;width:11px;height:11px;background:#fff;border:1px solid;border-color:#6d6d6d #e8e8e8 #e8e8e8 #6d6d6d;box-shadow:inset 1px 1px 0 #a8a8a8"></div>
<div class="a t " style="left:1185px;top:487.6px;line-height:16px;font-size:13.5px;color:#000;">BidSize</div>
<div class="a" style="left:1167px;top:510px;width:11px;height:11px;background:#fff;border:1px solid;border-color:#6d6d6d #e8e8e8 #e8e8e8 #6d6d6d;box-shadow:inset 1px 1px 0 #a8a8a8"></div>
<div class="a t " style="left:1185px;top:509.6px;line-height:16px;font-size:13.5px;color:#000;">Ask</div>
<div class="a" style="left:1167px;top:532px;width:11px;height:11px;background:#fff;border:1px solid;border-color:#6d6d6d #e8e8e8 #e8e8e8 #6d6d6d;box-shadow:inset 1px 1px 0 #a8a8a8"></div>
<div class="a t " style="left:1185px;top:531.6px;line-height:16px;font-size:13.5px;color:#000;">AskSize</div>
<div class="a" style="left:1276px;top:318px;width:318px;height:159px;border:1px solid #a0a0a0;box-shadow:inset 1px 1px 0 #fff,1px 1px 0 #fff"></div>
<div class="a" style="left:1282px;top:311px;width:107px;height:14px;background:#f0f0f0;"></div>
<div class="a t " style="left:1285px;top:310.6px;line-height:16px;font-size:13.5px;color:#000;">Highlight &amp; Alert:</div>
<div class="a t " style="left:1291px;top:331.1px;line-height:16px;font-size:13.5px;color:#000;">By Field:</div>
<div class="a t " style="left:1415px;top:331.1px;line-height:16px;font-size:13.5px;color:#000;">Condition:</div>
<div class="a t " style="left:1501px;top:331.1px;line-height:16px;font-size:13.5px;color:#000;">Value:</div>
<div class="a" style="left:1291px;top:350px;width:113px;height:21px;background:#fff;border:1px solid;border-color:#a0a0a0 #fff #fff #a0a0a0;box-shadow:inset 1px 1px 0 #696969,inset -1px -1px 0 #e3e3e3"></div>
<div class="a" style="left:1387px;top:352px;width:15px;height:17px;background:#f0f0f0;border:1px solid;border-color:#fff #696969 #696969 #fff;box-shadow:inset -1px -1px 0 #a0a0a0"></div>
<svg class="a" style="left:1391.0px;top:357.5px" width="10" height="8"><path d="M1.5 2 L8.5 2 L5 6Z" fill="#000"/></svg>
<div class="a t " style="left:1296px;top:354.1px;line-height:16px;font-size:13.5px;color:#000;">None</div>
<div class="a" style="left:1415px;top:350px;width:75px;height:21px;background:#f0f0f0;border:1px solid;border-color:#a0a0a0 #fff #fff #a0a0a0;box-shadow:inset 1px 1px 0 #696969,inset -1px -1px 0 #e3e3e3"></div>
<div class="a" style="left:1473px;top:352px;width:15px;height:17px;background:#f0f0f0;border:1px solid;border-color:#fff #696969 #696969 #fff;box-shadow:inset -1px -1px 0 #a0a0a0"></div>
<svg class="a" style="left:1477.0px;top:357.5px" width="10" height="8"><path d="M1.5 2 L8.5 2 L5 6Z" fill="#a0a0a0"/></svg>
<div class="a t " style="left:1420px;top:354.1px;line-height:16px;font-size:13.5px;color:#8c8c8c;">=</div>
<div class="a" style="left:1501px;top:350px;width:88px;height:21px;background:#f0f0f0;border:1px solid;border-color:#a0a0a0 #fff #fff #a0a0a0;box-shadow:inset 1px 1px 0 #696969,inset -1px -1px 0 #e3e3e3"></div>
<div class="a t " style="left:1505px;top:354.1px;line-height:16px;font-size:13.5px;color:#8c8c8c;">0</div>
<div class="a" style="left:1291px;top:388px;width:11px;height:11px;background:#f0f0f0;border:1px solid;border-color:#b0b0b0 #e8e8e8 #e8e8e8 #b0b0b0;box-shadow:inset 1px 1px 0 #a8a8a8"></div>
<div class="a t " style="left:1309px;top:387.6px;line-height:16px;font-size:13.5px;color:#9c9c9c;text-shadow:1px 1px 0 #fff">Color Row</div>
<div class="a t " style="left:1291px;top:418.6px;line-height:16px;font-size:13.5px;color:#000;">Bid Trade Alert:</div>
<div class="a" style="left:1415px;top:414px;width:113px;height:21px;background:#f0f0f0;border:1px solid;border-color:#a0a0a0 #fff #fff #a0a0a0;box-shadow:inset 1px 1px 0 #696969,inset -1px -1px 0 #e3e3e3"></div>
<div class="a" style="left:1511px;top:416px;width:15px;height:17px;background:#f0f0f0;border:1px solid;border-color:#fff #696969 #696969 #fff;box-shadow:inset -1px -1px 0 #a0a0a0"></div>
<svg class="a" style="left:1515.0px;top:421.5px" width="10" height="8"><path d="M1.5 2 L8.5 2 L5 6Z" fill="#a0a0a0"/></svg>
<div class="a t " style="left:1420px;top:418.1px;line-height:16px;font-size:13.5px;color:#8c8c8c;">No Alert Sound</div>
<div class="a t " style="left:1291px;top:450.1px;line-height:16px;font-size:13.5px;color:#000;">Ask Trade Alert:</div>
<div class="a" style="left:1415px;top:446px;width:113px;height:21px;background:#f0f0f0;border:1px solid;border-color:#a0a0a0 #fff #fff #a0a0a0;box-shadow:inset 1px 1px 0 #696969,inset -1px -1px 0 #e3e3e3"></div>
<div class="a" style="left:1511px;top:448px;width:15px;height:17px;background:#f0f0f0;border:1px solid;border-color:#fff #696969 #696969 #fff;box-shadow:inset -1px -1px 0 #a0a0a0"></div>
<svg class="a" style="left:1515.0px;top:453.5px" width="10" height="8"><path d="M1.5 2 L8.5 2 L5 6Z" fill="#a0a0a0"/></svg>
<div class="a t " style="left:1420px;top:450.1px;line-height:16px;font-size:13.5px;color:#8c8c8c;">No Alert Sound</div>
<div class="a" style="left:829px;top:564px;width:436px;height:142px;border:1px solid #a0a0a0;box-shadow:inset 1px 1px 0 #fff,1px 1px 0 #fff"></div>
<div class="a" style="left:835px;top:557px;width:83px;height:14px;background:#f0f0f0;"></div>
<div class="a t " style="left:838px;top:556.6px;line-height:16px;font-size:13.5px;color:#000;">Input Filtering:</div>
<div class="a t " style="left:839px;top:584.6px;line-height:16px;font-size:13.5px;color:#000;">Volume &gt;=</div>
<div class="a" style="left:917px;top:580px;width:74px;height:22px;background:#fff;border:1px solid;border-color:#a0a0a0 #fff #fff #a0a0a0;box-shadow:inset 1px 1px 0 #696969,inset -1px -1px 0 #e3e3e3"></div>
<div class="a t " style="left:921px;top:584.6px;line-height:16px;font-size:13.5px;color:#000;">5</div>
<div class="a t " style="left:999px;top:584.6px;line-height:16px;font-size:13.5px;color:#000;">(min)</div>
<div class="a t " style="left:1055px;top:584.6px;line-height:16px;font-size:13.5px;color:#000;">Price &gt;=</div>
<div class="a" style="left:1133px;top:580px;width:74px;height:22px;background:#fff;border:1px solid;border-color:#a0a0a0 #fff #fff #a0a0a0;box-shadow:inset 1px 1px 0 #696969,inset -1px -1px 0 #e3e3e3"></div>
<div class="a t " style="left:1214px;top:584.6px;line-height:16px;font-size:13.5px;color:#000;">(min)</div>
<div class="a t " style="left:839px;top:616.6px;line-height:16px;font-size:13.5px;color:#000;">Volume &lt;=</div>
<div class="a" style="left:917px;top:612px;width:74px;height:22px;background:#fff;border:1px solid;border-color:#a0a0a0 #fff #fff #a0a0a0;box-shadow:inset 1px 1px 0 #696969,inset -1px -1px 0 #e3e3e3"></div>
<div class="a t " style="left:999px;top:616.6px;line-height:16px;font-size:13.5px;color:#000;">(max)</div>
<div class="a t " style="left:1055px;top:616.6px;line-height:16px;font-size:13.5px;color:#000;">Price &lt;=</div>
<div class="a" style="left:1133px;top:612px;width:74px;height:22px;background:#fff;border:1px solid;border-color:#a0a0a0 #fff #fff #a0a0a0;box-shadow:inset 1px 1px 0 #696969,inset -1px -1px 0 #e3e3e3"></div>
<div class="a t " style="left:1214px;top:616.6px;line-height:16px;font-size:13.5px;color:#000;">(max)</div>
<div class="a t " style="left:839px;top:648.6px;line-height:16px;font-size:13.5px;color:#000;">Ask Size &gt;=</div>
<div class="a" style="left:917px;top:644px;width:74px;height:22px;background:#fff;border:1px solid;border-color:#a0a0a0 #fff #fff #a0a0a0;box-shadow:inset 1px 1px 0 #696969,inset -1px -1px 0 #e3e3e3"></div>
<div class="a t " style="left:999px;top:648.6px;line-height:16px;font-size:13.5px;color:#000;">(min)</div>
<div class="a t " style="left:1055px;top:648.6px;line-height:16px;font-size:13.5px;color:#000;">Bid Size &gt;=</div>
<div class="a" style="left:1133px;top:644px;width:74px;height:22px;background:#fff;border:1px solid;border-color:#a0a0a0 #fff #fff #a0a0a0;box-shadow:inset 1px 1px 0 #696969,inset -1px -1px 0 #e3e3e3"></div>
<div class="a t " style="left:1137px;top:648.6px;line-height:16px;font-size:13.5px;color:#000;">5</div>
<div class="a t " style="left:1214px;top:648.6px;line-height:16px;font-size:13.5px;color:#000;">(min)</div>
<div class="a t " style="left:839px;top:680.6px;line-height:16px;font-size:13.5px;color:#000;">Ask Size &lt;=</div>
<div class="a" style="left:917px;top:676px;width:74px;height:22px;background:#fff;border:1px solid;border-color:#a0a0a0 #fff #fff #a0a0a0;box-shadow:inset 1px 1px 0 #696969,inset -1px -1px 0 #e3e3e3"></div>
<div class="a t " style="left:999px;top:680.6px;line-height:16px;font-size:13.5px;color:#000;">(max)</div>
<div class="a t " style="left:1055px;top:680.6px;line-height:16px;font-size:13.5px;color:#000;">Bid Size &lt;=</div>
<div class="a" style="left:1133px;top:676px;width:74px;height:22px;background:#fff;border:1px solid;border-color:#a0a0a0 #fff #fff #a0a0a0;box-shadow:inset 1px 1px 0 #696969,inset -1px -1px 0 #e3e3e3"></div>
<div class="a t " style="left:1214px;top:680.6px;line-height:16px;font-size:13.5px;color:#000;">(max)</div>
<div class="a" style="left:829px;top:720px;width:436px;height:78px;border:1px solid #a0a0a0;box-shadow:inset 1px 1px 0 #fff,1px 1px 0 #fff"></div>
<div class="a" style="left:835px;top:713px;width:106px;height:14px;background:#f0f0f0;"></div>
<div class="a t " style="left:838px;top:712.6px;line-height:16px;font-size:13.5px;color:#000;">Combined Filtering:</div>
<div class="a t " style="left:839px;top:738.6px;line-height:16px;font-size:13.5px;color:#000;">Volume &gt;=</div>
<div class="a" style="left:917px;top:734px;width:74px;height:22px;background:#fff;border:1px solid;border-color:#a0a0a0 #fff #fff #a0a0a0;box-shadow:inset 1px 1px 0 #696969,inset -1px -1px 0 #e3e3e3"></div>
<div class="a t " style="left:921px;top:738.6px;line-height:16px;font-size:13.5px;color:#000;">5</div>
<div class="a t " style="left:999px;top:738.6px;line-height:16px;font-size:13.5px;color:#000;">(min)</div>
<div class="a t " style="left:1056px;top:738.6px;line-height:16px;font-size:13.5px;color:#000;">Trades &gt;=</div>
<div class="a" style="left:1133px;top:734px;width:74px;height:22px;background:#fff;border:1px solid;border-color:#a0a0a0 #fff #fff #a0a0a0;box-shadow:inset 1px 1px 0 #696969,inset -1px -1px 0 #e3e3e3"></div>
<div class="a t " style="left:1214px;top:738.6px;line-height:16px;font-size:13.5px;color:#000;">(min)</div>
<div class="a t " style="left:839px;top:770.6px;line-height:16px;font-size:13.5px;color:#000;">Volume &lt;=</div>
<div class="a" style="left:917px;top:766px;width:74px;height:22px;background:#fff;border:1px solid;border-color:#a0a0a0 #fff #fff #a0a0a0;box-shadow:inset 1px 1px 0 #696969,inset -1px -1px 0 #e3e3e3"></div>
<div class="a t " style="left:999px;top:770.6px;line-height:16px;font-size:13.5px;color:#000;">(max)</div>
<div class="a t " style="left:1056px;top:770.6px;line-height:16px;font-size:13.5px;color:#000;">Trades &lt;=</div>
<div class="a" style="left:1133px;top:766px;width:74px;height:22px;background:#fff;border:1px solid;border-color:#a0a0a0 #fff #fff #a0a0a0;box-shadow:inset 1px 1px 0 #696969,inset -1px -1px 0 #e3e3e3"></div>
<div class="a t " style="left:1214px;top:770.6px;line-height:16px;font-size:13.5px;color:#000;">(max)</div>
<div class="a" style="left:1047px;top:810px;width:98px;height:26px;background:#f0f0f0;border:1px solid #646464;box-shadow:inset 1px 1px 0 #fff,inset -1px -1px 0 #6a6a6a,inset 2px 2px 0 #e3e3e3"></div>
<div class="a t" style="left:1047.0px;width:100px;text-align:center;top:816.0px;line-height:16px;font-size:13.5px;color:#000;">OK</div>
<div class="a" style="left:1163px;top:810px;width:98px;height:26px;background:#f0f0f0;border:1px solid #646464;box-shadow:inset 1px 1px 0 #fff,inset -1px -1px 0 #6a6a6a,inset 2px 2px 0 #e3e3e3"></div>
<div class="a t" style="left:1163.0px;width:100px;text-align:center;top:816.0px;line-height:16px;font-size:13.5px;color:#000;">Cancel</div>
<div class="a" style="left:1279px;top:810px;width:98px;height:26px;background:#f0f0f0;border:1px solid;border-color:#fff #6a6a6a #6a6a6a #fff;box-shadow:inset 1px 1px 0 #e3e3e3,inset -1px -1px 0 #a0a0a0"></div>
<div class="a t" style="left:1279.0px;width:100px;text-align:center;top:816.0px;line-height:16px;font-size:13.5px;color:#000;">Apply</div>
</body></html>
